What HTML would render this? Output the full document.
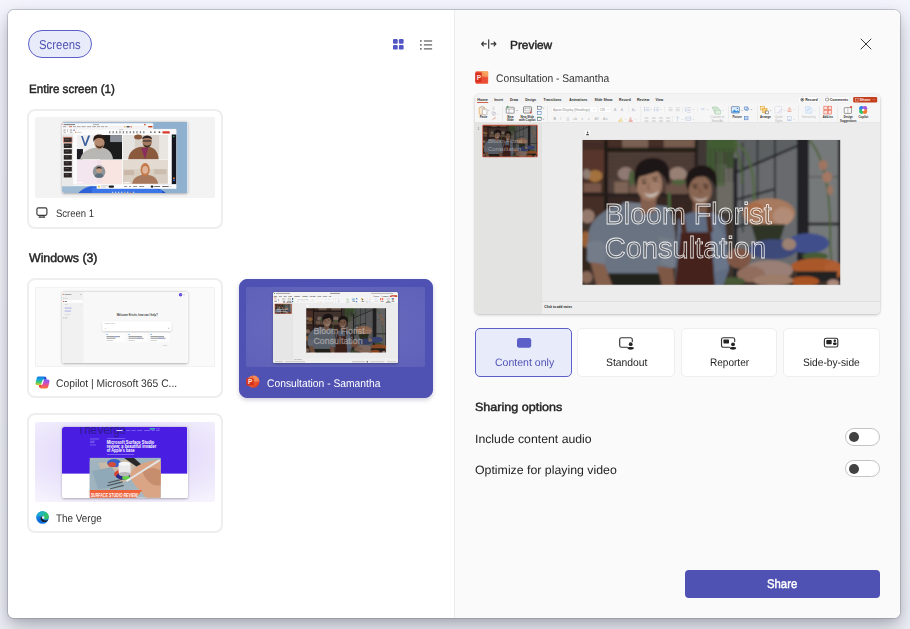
<!DOCTYPE html>
<html lang="en">
<head>
<meta charset="utf-8">
<title>Share content</title>
<style>
*{box-sizing:border-box;margin:0;padding:0}
html,body{width:910px;height:629px;overflow:hidden}
body{position:relative;font-family:"Liberation Sans",sans-serif;color:#242424;
 background:linear-gradient(180deg,#f3f4fc 0px,#eef0f8 629px);}
.abs{position:absolute}
svg.abs{overflow:visible}
#shadow{position:absolute;left:8px;top:10px;width:892px;height:608px;border-radius:6px;
 box-shadow:0 0 0 1px rgba(120,122,132,.36),0 9px 20px rgba(40,42,54,.32),0 2px 6px rgba(40,42,54,.1);}
#dlg{position:absolute;left:8px;top:10px;width:892px;height:608px;border-radius:6px;background:#fff;overflow:hidden}
#right{position:absolute;left:446px;top:0;width:446px;height:609px;background:#fafafa;border-left:1px solid #ebebeb}
.t{position:absolute;white-space:nowrap;transform-origin:0 0;text-rendering:geometricPrecision}
.card{position:absolute;width:196px;height:120.3px;border:2px solid #eeeeee;border-radius:8px;background:#fff}
.card .th{position:absolute;left:6.2px;top:6.5px;width:179.4px;height:80.7px;background:#f3f3f3;overflow:hidden;border-radius:2px}
.card .win{position:absolute;left:27.2px;top:5px;width:125.2px;height:71.2px;border-radius:2.5px;overflow:hidden;background:#fff}
.card .wsh{position:absolute;left:27.2px;top:5px;width:125.2px;height:71.2px;border-radius:2.5px;box-shadow:0 .5px 2.5px rgba(0,0,0,.3)}
.card .win svg{display:block}
.card.sel{background:#4f52b2;border-color:#4f52b2;margin:1px;width:194.6px;height:118.9px;border-width:1px}
.card.sel .th{background:radial-gradient(ellipse at 50% 50%,#696bc0 0%,#6466bc 55%,#5f61b9 100%)}
.card.sel{box-shadow:0 2px 4px rgba(40,42,90,.22)}
.mode{position:absolute;top:328px;height:48.5px;width:97px;border:1px solid #eeeeee;border-radius:5px;background:#fff}
.mode.on{background:#e8ebfa;border-color:#5b5fc7}
.tog{position:absolute;left:844.5px;width:35.5px;height:17.5px;border:1px solid #c4c4c4;border-radius:9px;background:#fff}
.tog i{position:absolute;left:3px;top:2.7px;width:10.3px;height:10.3px;border-radius:50%;background:#424242}
</style>
</head>
<body>
<svg width="0" height="0" style="position:absolute"><defs>
<filter id="bl1" x="-5%" y="-5%" width="110%" height="110%"><feGaussianBlur stdDeviation="1.1"/></filter>
<filter id="bl2" x="-5%" y="-5%" width="110%" height="110%"><feGaussianBlur stdDeviation="2.4"/></filter>
<filter id="bl3" x="-5%" y="-5%" width="110%" height="110%"><feGaussianBlur stdDeviation="3.5"/></filter>
<filter id="bl4" x="-5%" y="-5%" width="110%" height="110%"><feGaussianBlur stdDeviation=".45"/></filter>
<filter id="sh2" x="-10%" y="-30%" width="120%" height="180%"><feGaussianBlur in="SourceAlpha" stdDeviation="1"/><feOffset dy=".6"/><feComponentTransfer><feFuncA type="linear" slope=".18"/></feComponentTransfer><feMerge><feMergeNode/><feMergeNode in="SourceGraphic"/></feMerge></filter>
</defs></svg>
<div id="shadow"></div>
<div id="dlg"><div id="right"></div></div>

<div class="abs" style="left:28px;top:30px;width:64px;height:28px;border:1px solid #5b5fc7;border-radius:14px;background:#e8ebfa"></div>
<div class="t" style="left:39.1px;top:39px;font-size:12.9px;line-height:12.9px;color:#4f52b2;transform:scaleX(0.8833);">Screens</div>
<svg class="abs" style="left:393px;top:38.8px" width="10.6" height="10.6" viewBox="0 0 10.6 10.6"><g fill="#5156c4"><rect x="0" y="0" width="4.7" height="4.7" rx="1.2"/><rect x="5.9" y="0" width="4.7" height="4.7" rx="1.2"/><rect x="0" y="5.9" width="4.7" height="4.7" rx="1.2"/><rect x="5.9" y="5.9" width="4.7" height="4.7" rx="1.2"/></g></svg>
<svg class="abs" style="left:420px;top:39.9px" width="13" height="10" viewBox="0 0 13 10"><g fill="#3d3d3d"><rect x="0" y=".4" width="1.7" height="1.2"/><rect x="3.9" y=".5" width="8.2" height="1"/><rect x="0" y="4.3" width="1.7" height="1.2"/><rect x="3.9" y="4.4" width="8.2" height="1"/><rect x="0" y="8.3" width="1.7" height="1.2"/><rect x="3.9" y="8.4" width="8.2" height="1"/></g></svg>
<div class="t" style="left:29px;top:83px;font-size:12.17px;line-height:12.17px;color:#242424;transform:scaleX(0.956);-webkit-text-stroke:.45px #242424;">Entire screen (1)</div>
<div class="t" style="left:29px;top:252px;font-size:12.32px;line-height:12.32px;color:#242424;transform:scaleX(1.0006);-webkit-text-stroke:.45px #242424;">Windows (3)</div>
<div class="card" style="left:27px;top:108.7px"><div class="th"><div class="wsh"></div><div class="win"><svg width="125.2" height="71.2" viewBox="0 0 125 71" preserveAspectRatio="none"><rect width="125" height="71" fill="#9fbad3"/>
<rect x="90" width="35" height="71" fill="#8fb0cf"/>
<g filter="url(#bl4)"><path d="M16 71 C30 58 50 62 62 71Z" fill="#2d62d8"/><path d="M40 71 C60 58 92 60 104 71Z" fill="#1f4fc8"/><path d="M30 66 C50 62 80 63 100 68 L100 71 L30 71Z" fill="#3b76e8"/></g>
<g fill="#e8eef6"><rect x="50" y="69.6" width="1.2" height="1" /><rect x="53" y="69.6" width="1.2" height="1"/><rect x="56" y="69.6" width="1.2" height="1"/><rect x="59" y="69.6" width="1.2" height="1"/><rect x="62" y="69.6" width="1.2" height="1" fill="#e8c060"/><rect x="65" y="69.6" width="1.2" height="1"/><rect x="68" y="69.6" width="1.2" height="1" fill="#e07040"/><rect x="71" y="69.6" width="1.2" height="1"/></g>
<rect x="0" y="1.5" width="91" height="62.5" fill="#f4f4f4"/>
<rect x="0" y="1.5" width="91" height="2.2" fill="#fbfbfb"/>
<rect x="2" y="2.3" width="11" height=".8" fill="#555"/><circle cx=".9" cy="2.6" r=".5" fill="#d04a2a"/><rect x="31" y="2.3" width="6" height=".8" fill="#999"/>
<rect x="0" y="3.8" width="91" height="1.8" fill="#f1f1f1"/>
<g fill="#8a8a8a"><rect x="1" y="4.4" width="3" height=".7"/><rect x="7" y="4.4" width="3" height=".7" fill="#c43e1c"/><rect x="11" y="4.4" width="3" height=".7"/><rect x="15" y="4.4" width="3.5" height=".7"/><rect x="19.5" y="4.4" width="4" height=".7"/><rect x="25" y="4.4" width="4" height=".7"/><rect x="30" y="4.4" width="4" height=".7"/><rect x="35" y="4.4" width="3" height=".7"/><rect x="39" y="4.4" width="3" height=".7"/><rect x="43" y="4.4" width="2.4" height=".7"/></g>
<rect x="82" y="1.9" width="1.4" height="1.4" fill="#d04a2a"/><rect x="86" y="4.1" width="4.4" height="1.4" rx=".4" fill="#c43e1c"/><rect x="62" y="4.2" width="1.2" height="1.2" fill="#e0a030"/><rect x="64.5" y="4.2" width="3" height="1.2" fill="#333"/><rect x="68.5" y="4.2" width="1.2" height="1.2" fill="#d04a2a"/>
<rect x="0" y="5.8" width="91" height="6.5" fill="#f8f8f8"/>
<g fill="#c9c9c9"><rect x="1.5" y="7" width="2" height="2.6"/><rect x="5" y="7" width="1" height="3"/><rect x="8" y="7" width="2" height="2.6"/><rect x="1.5" y="10.5" width="2.4" height=".6" fill="#999"/><rect x="7.6" y="10.5" width="2.8" height=".6" fill="#999"/></g>
<rect x="0" y="12.3" width="10.8" height="51.7" fill="#e9e9e9"/>
<rect x="1.8" y="15.4" width="8" height="4.5" fill="#3a2c28"/>
<rect x="3" y="17" width="4" height=".5" fill="#9a9a9a" opacity=".6"/>
<rect x="1.8" y="21.4" width="8" height="4.5" fill="#2a2422"/>
<rect x="3" y="23" width="4" height=".5" fill="#9a9a9a" opacity=".6"/>
<rect x="1.8" y="27.2" width="8" height="4.5" fill="#2a2422"/>
<rect x="3" y="28.8" width="4" height=".5" fill="#9a9a9a" opacity=".6"/>
<rect x="1.8" y="33" width="8" height="4.5" fill="#2a2422"/>
<rect x="3" y="34.6" width="4" height=".5" fill="#9a9a9a" opacity=".6"/>
<rect x="1.8" y="39" width="8" height="4.5" fill="#2a2422"/>
<rect x="3" y="40.6" width="4" height=".5" fill="#9a9a9a" opacity=".6"/>
<rect x="1.8" y="44.8" width="8" height="4.5" fill="#2a2422"/>
<rect x="3" y="46.4" width="4" height=".5" fill="#9a9a9a" opacity=".6"/>
<rect x="1.8" y="50.8" width="8" height="4.5" fill="#2a2422"/>
<rect x="3" y="52.4" width="4" height=".5" fill="#9a9a9a" opacity=".6"/>
<rect x="1.5" y="15.1" width="8.6" height="5.1" fill="none" stroke="#c9563c" stroke-width=".5"/>
<rect x="10.8" y="7" width="103.4" height="55.3" rx=".8" fill="#fbfbfb" stroke="#d6d6d6" stroke-width=".3"/>
<rect x="11.5" y="7.6" width="1.2" height="1.2" rx=".3" fill="#4f52b2"/>
<rect x="57" y="7.5" width="4" height=".6" fill="#aaa"/>
<rect x="13" y="9.7" width="1.4" height="1" fill="#e07050"/><rect x="15.4" y="9.9" width="4" height=".7" fill="#bbb"/>
<rect x="47" y="9.3" width="1.4" height="1.4" rx=".4" fill="#5a5a5a"/><rect x="46.8" y="11.4" width="1.8" height=".4" fill="#aaa"/>
<rect x="50.4" y="9.3" width="1.4" height="1.4" rx=".4" fill="#5a5a5a"/><rect x="50.2" y="11.4" width="1.8" height=".4" fill="#aaa"/>
<rect x="53.8" y="9.3" width="1.4" height="1.4" rx=".4" fill="#5a5a5a"/><rect x="53.6" y="11.4" width="1.8" height=".4" fill="#aaa"/>
<rect x="57.2" y="9.3" width="1.4" height="1.4" rx=".4" fill="#5a5a5a"/><rect x="57" y="11.4" width="1.8" height=".4" fill="#aaa"/>
<rect x="60.6" y="9.3" width="1.4" height="1.4" rx=".4" fill="#5a5a5a"/><rect x="60.4" y="11.4" width="1.8" height=".4" fill="#aaa"/>
<rect x="64" y="9.3" width="1.4" height="1.4" rx=".4" fill="#5a5a5a"/><rect x="63.8" y="11.4" width="1.8" height=".4" fill="#aaa"/>
<rect x="67.4" y="9.3" width="1.4" height="1.4" rx=".4" fill="#5a5a5a"/><rect x="67.2" y="11.4" width="1.8" height=".4" fill="#aaa"/>
<rect x="70.8" y="9.3" width="1.4" height="1.4" rx=".4" fill="#5a5a5a"/><rect x="70.6" y="11.4" width="1.8" height=".4" fill="#aaa"/>
<rect x="74.2" y="9.3" width="1.4" height="1.4" rx=".4" fill="#5a5a5a"/><rect x="74" y="11.4" width="1.8" height=".4" fill="#aaa"/>
<rect x="77.6" y="9.3" width="1.4" height="1.4" rx=".4" fill="#5a5a5a"/><rect x="77.4" y="11.4" width="1.8" height=".4" fill="#aaa"/>
<rect x="81" y="9.3" width="1.4" height="1.4" rx=".4" fill="#5a5a5a"/><rect x="80.8" y="11.4" width="1.8" height=".4" fill="#aaa"/>
<rect x="88" y="9.4" width="1.4" height="1.4" rx=".3" fill="#333"/><rect x="92" y="9.4" width="1.4" height="1.4" rx=".3" fill="#333"/><rect x="96.5" y="9.4" width="1.6" height="1.4" rx=".3" fill="#222"/>
<rect x="100.3" y="9.2" width="7.3" height="2.2" rx=".5" fill="#d8392b"/>
<g filter="url(#bl4)">
<rect x="14.9" y="13" width="45" height="24.4" fill="#f0f0f0"/>
<rect x="38" y="13" width="22" height="24.4" fill="#1b1a1c"/>
<rect x="48" y="13" width="12" height="7" fill="#8a8f98"/>
<rect x="14.9" y="27" width="6" height="10.4" fill="#1f1f22"/>
<path d="M19 14 l3.5 10 h1.6 l4 -10.5 h-2 l-2.9 8 l-2.5 -7.5z" fill="#3a5f9c"/>
<path d="M18 37.4 C20 28 30 25.5 37 25.5 C46 25.5 50 30 51 37.4Z" fill="#b9b7b4"/>
<ellipse cx="37.4" cy="20.5" rx="5.2" ry="6.6" fill="#b58a70"/>
<path d="M31.5 20 C30 12.5 36 12.2 38 12.5 C43 12.5 44.5 16 43.3 21 C42 17 40 16 37 16 C34 16 33 17 31.5 20Z" fill="#2a1e18"/>
<path d="M33.6 22.5 C34.5 27.5 40.5 27.5 41.4 22.5 C40 25 35 25 33.6 22.5Z" fill="#4a3428"/>
<rect x="60.7" y="13" width="45" height="24.4" fill="#d8d2cb"/>
<rect x="60.7" y="13" width="12" height="24.4" fill="#e6e4e0"/>
<rect x="97" y="13" width="9" height="24.4" fill="#e9e6e2"/>
<ellipse cx="76" cy="15" rx="4" ry="2.5" fill="#8a5a3c"/>
<path d="M66 37.4 C67 27 76 24.5 83 24.5 C92 24.5 96 29 96.5 37.4Z" fill="#8b5a3e"/>
<path d="M79 26 L83 37.4 L86 26Z" fill="#8a2f5c"/>
<ellipse cx="85" cy="19.5" rx="4.8" ry="6.2" fill="#a47a60"/>
<path d="M80 17 C80 12.5 90 12.5 90 17 C88 15.5 82 15.5 80 17Z" fill="#2a2220"/>
<path d="M81 21.5 C82 27 88 27 89 21.5 C87.5 24.5 82.5 24.5 81 21.5Z" fill="#3a2c26"/>
<rect x="81" y="18.2" width="8" height="1.4" fill="#30282a" opacity=".8"/>
<rect x="14.9" y="38" width="45" height="23.6" fill="#f3dfe6"/>
<rect x="14.9" y="38" width="20" height="23.6" fill="#f3e6ee"/>
<rect x="40" y="38" width="20" height="23.6" fill="#f8e4e0"/>
<circle cx="37" cy="49.5" r="6.3" fill="#8f9499"/>
<circle cx="37" cy="48" r="2.8" fill="#c09a84"/><path d="M32.5 54 C33 50 41 50 41.5 54 C40 56 34 56 32.5 54Z" fill="#5d6f7c"/>
<path d="M34.3 47 C34.3 43.8 39.7 43.8 39.7 47 C38.5 45.8 35.5 45.8 34.3 47Z" fill="#3a2a22"/>
<rect x="60.7" y="38" width="45" height="23.6" fill="#d9cec2"/>
<rect x="60.7" y="38" width="45" height="9" fill="#e3dbd1"/>
<rect x="62" y="48" width="10" height="5" fill="#c9b8aa"/><rect x="92" y="47" width="12" height="5" fill="#cbbcb0"/>
<path d="M70 61.6 C71 54 78 52.5 83 52.5 C90 52.5 95 55 96 61.6Z" fill="#a8785c"/>
<ellipse cx="83" cy="47.5" rx="4.6" ry="6.5" fill="#c4794a"/>
<ellipse cx="83" cy="47.8" rx="2.9" ry="3.8" fill="#dfb49a"/>
</g>
<rect x="59.9" y="13" width=".8" height="48.6" fill="#fbfbfb"/><rect x="14.9" y="37.4" width="90.8" height=".6" fill="#fbfbfb"/>
<rect x="15.6" y="59.8" width="5" height="1.2" fill="#fff" opacity=".8"/><rect x="61.6" y="59.8" width="6" height="1.2" fill="#fff" opacity=".8"/>
<rect x="109.6" y="12.5" width="4.4" height="49.5" fill="#15161f"/>
<circle cx="111.7" cy="14.5" r=".7" fill="#3fbf5f"/><circle cx="111.7" cy="56" r=".9" fill="#e07a30"/><circle cx="111.9" cy="58" r=".9" fill="#3b76e8"/>
<rect x="34.6" y="62.2" width="79.6" height="4.4" fill="#fdfdfd"/>
<rect x="36" y="63.6" width="2" height="1.6" fill="#e8c040"/><rect x="39" y="63.4" width="7" height=".6" fill="#aaa"/><rect x="39" y="64.6" width="5" height=".6" fill="#bbb"/>
<rect x="46.5" y="63.3" width="5.5" height="2.2" rx="1.1" fill="#1c1c1c"/>
<g fill="#777"><rect x="62" y="64" width="3" height=".8"/><rect x="67" y="64" width="2" height=".8"/><rect x="71" y="64" width="4" height=".8"/><rect x="77" y="64" width="5" height=".8"/></g>
<rect x="88.5" y="63.3" width="2.8" height="2.2" rx="1.1" fill="#1c1c1c"/><rect x="92" y="64" width="6" height=".8" fill="#444"/><rect x="100" y="64" width="6.5" height=".8" fill="#444"/><path d="M108 64 l.6 .7 l.6 -.7" stroke="#444" stroke-width=".3" fill="none"/></svg></div></div></div>
<div class="card" style="left:27px;top:278.2px"><div class="th" style="background:#fafafa;box-shadow:inset 0 0 0 .6px #e9e9e9"><div class="wsh"></div><div class="win"><svg width="125.2" height="71.2" viewBox="0 0 125 71" preserveAspectRatio="none"><rect width="125" height="71" fill="#f8f8f8"/>
<rect width="21.4" height="71" fill="#f1f1f1"/>
<g font-family="Liberation Sans, sans-serif">
<rect x=".8" y="1.8" width="1" height="1" fill="#d05a4a"/><rect x="2.4" y="2" width="7" height=".8" fill="#9a9a9a"/><rect x="18" y="2" width="1.6" height=".8" fill="#bbb"/>
<rect x=".8" y="5.8" width="1" height=".8" fill="#bbb"/><rect x="2.6" y="5.9" width="3" height=".7" fill="#c4c4c4"/>
<rect x=".6" y="8" width="20.2" height="2.8" rx=".6" fill="#fff"/><rect x="1" y="8.9" width="1" height="1" fill="#e0503a"/><rect x="2.6" y="9.1" width="2.4" height=".8" fill="#666"/>
<rect x="2.6" y="12.3" width="3" height=".6" fill="#ccc"/><rect x="18.5" y="12.3" width="1" height=".6" fill="#ddd"/>
<rect x="2.6" y="15.6" width="7" height=".8" fill="#9aa0e8"/><rect x="2.6" y="18.6" width="6.4" height=".8" fill="#9aa0e8"/>
<rect x="2.6" y="22.4" width="5.5" height=".6" fill="#ccc"/><rect x="18.5" y="22.4" width="1" height=".6" fill="#ddd"/>
<rect x=".8" y="25.4" width="1" height=".8" fill="#aaa"/><rect x="2.6" y="25.5" width="2.6" height=".7" fill="#aaa"/>
<circle cx="118.4" cy="2.7" r="1.7" fill="#5b3fd6"/><circle cx="118.7" cy="2.5" r=".8" fill="#8a72ea"/><rect x="121.4" y="2.2" width="1" height="1" fill="#9ac8a4"/>
<text x="54.6" y="24.2" font-size="2.9" fill="#3a3a3a" font-weight="bold" textLength="41" lengthAdjust="spacingAndGlyphs" >Welcome Kristin, how can I help?</text>
<rect x="40.3" y="29.2" width="69" height="9.6" rx="2" fill="#fff" filter="url(#sh2)"/>
<text x="42.6" y="32.4" font-size="1.6" fill="#999" textLength="10" lengthAdjust="spacingAndGlyphs" >Message Copilot</text>
<rect x="43" y="36" width="1.2" height=".8" fill="#ccc"/><rect x="105.8" y="35.6" width="1.3" height="1.3" fill="#c9c9c9"/>
<rect x="43.4" y="40.8" width="20" height="9" rx="1" fill="#fdfdfd"/>
<circle cx="45" cy="42.3" r=".6" fill="#4a9cf0"/>
<rect x="44.4" y="44.2" width="13.5" height=".8" fill="#777"/>
<rect x="44.4" y="45.7" width="9" height=".8" fill="#8a8a8a"/>
<rect x="44.4" y="48" width="6.5" height=".6" fill="#bbb"/>
<rect x="65.4" y="40.8" width="20" height="9" rx="1" fill="#fdfdfd"/>
<circle cx="67" cy="42.3" r=".6" fill="#4a9cf0"/>
<rect x="66.4" y="44.2" width="13.5" height=".8" fill="#777"/>
<rect x="66.4" y="45.7" width="15" height=".8" fill="#8a8a8a"/>
<rect x="66.4" y="48" width="6.5" height=".6" fill="#bbb"/>
<rect x="87.4" y="40.8" width="20" height="9" rx="1" fill="#fdfdfd"/>
<circle cx="89" cy="42.3" r=".6" fill="#4a9cf0"/>
<rect x="88.4" y="44.2" width="13.5" height=".8" fill="#777"/>
<rect x="88.4" y="45.7" width="15" height=".8" fill="#8a8a8a"/>
<rect x="88.4" y="48" width="6.5" height=".6" fill="#bbb"/>
<rect x="75" y="45.7" width="3.5" height=".8" fill="#8fa6ee"/><rect x="96" y="45.7" width="6" height=".8" fill="#8fa6ee"/><rect x="52" y="44.2" width="3" height=".8" fill="#8fa6ee"/>
<rect x="100.6" y="53" width="4.6" height=".6" fill="#ccc"/>
</g></svg></div></div></div>
<div class="card sel" style="left:237.5px;top:278.2px"><div class="th"><div class="wsh"></div><div class="win"><svg width="125.2" height="71.2" viewBox="0 0 125 71" preserveAspectRatio="none"><rect width="125" height="71" fill="#ececec"/>
<rect width="125" height="2.6" fill="#f3f3f3"/>
<rect x="3" y=".9" width="14" height=".9" fill="#9a9a9a"/><circle cx="1.6" cy="1.3" r=".6" fill="#3a9a50"/>
<rect x="57" y=".9" width="10" height=".9" fill="#8a8a8a"/><rect x="98" y=".9" width="22" height=".9" fill="#b0b0b0"/>
<g transform="translate(0,2.4) scale(.3086)">
<rect x="0" y="0" width="405" height="28.6" fill="#f6f6f6"/>
<rect x="0" y="0" width="405" height="9.3" fill="#f3f3f3"/>
<rect x="0" y="28.3" width="405" height=".6" fill="#dedede"/>
<g font-family="Liberation Sans, sans-serif">
<text x="2.3" y="6.8" font-size="4.2" fill="#2b2b2b" font-weight="bold" textLength="10.5" lengthAdjust="spacingAndGlyphs" >Home</text>
<text x="19.2" y="6.8" font-size="4.2" fill="#2b2b2b" font-weight="bold" textLength="8.9" lengthAdjust="spacingAndGlyphs" >Insert</text>
<text x="34.9" y="6.8" font-size="4.2" fill="#2b2b2b" font-weight="bold" textLength="8.2" lengthAdjust="spacingAndGlyphs" >Draw</text>
<text x="50.1" y="6.8" font-size="4.2" fill="#2b2b2b" font-weight="bold" textLength="10.9" lengthAdjust="spacingAndGlyphs" >Design</text>
<text x="68.5" y="6.8" font-size="4.2" fill="#2b2b2b" font-weight="bold" textLength="17.9" lengthAdjust="spacingAndGlyphs" >Transitions</text>
<text x="94.2" y="6.8" font-size="4.2" fill="#2b2b2b" font-weight="bold" textLength="18" lengthAdjust="spacingAndGlyphs" >Animations</text>
<text x="119.3" y="6.8" font-size="4.2" fill="#2b2b2b" font-weight="bold" textLength="18" lengthAdjust="spacingAndGlyphs" >Slide Show</text>
<text x="144" y="6.8" font-size="4.2" fill="#2b2b2b" font-weight="bold" textLength="11.6" lengthAdjust="spacingAndGlyphs" >Record</text>
<text x="161.9" y="6.8" font-size="4.2" fill="#2b2b2b" font-weight="bold" textLength="12.3" lengthAdjust="spacingAndGlyphs" >Review</text>
<text x="180.3" y="6.8" font-size="4.2" fill="#2b2b2b" font-weight="bold" textLength="7.8" lengthAdjust="spacingAndGlyphs" >View</text>
<rect x="2" y="8.2" width="11.2" height=".8" fill="#c43e1c"/>
<rect x="323.3" y="3" width="20.5" height="5.4" rx="1.2" fill="#fff" stroke="#e3e3e3" stroke-width=".3"/>
<circle cx="327" cy="5.7" r="1.5" fill="none" stroke="#222" stroke-width=".5"/><circle cx="327" cy="5.7" r=".8" fill="#222"/>
<text x="330" y="7" font-size="3.6" fill="#2b2b2b" font-weight="bold" textLength="12.5" lengthAdjust="spacingAndGlyphs" >Record</text>
<rect x="348.4" y="3" width="26" height="5.4" rx="1.2" fill="#fff" stroke="#e3e3e3" stroke-width=".3"/>
<rect x="350.2" y="4.2" width="3.2" height="2.6" rx=".8" fill="none" stroke="#333" stroke-width=".45"/>
<text x="354.5" y="7" font-size="3.6" fill="#2b2b2b" font-weight="bold" textLength="18.5" lengthAdjust="spacingAndGlyphs" >Comments</text>
<rect x="377.9" y="3" width="24" height="5.6" rx="1.3" fill="#c43e1c"/>
<rect x="380" y="4.3" width="2.8" height="2.8" fill="none" stroke="#f6d3c9" stroke-width=".45"/>
<text x="384.3" y="7.1" font-size="3.7" fill="#fbe9e4" font-weight="bold" textLength="11" lengthAdjust="spacingAndGlyphs" >Share</text>
<path d="M397.5 5.2 l1 1 l1 -1" stroke="#f3c6b9" stroke-width=".4" fill="none"/>
<rect x="4.2" y="13.3" width="5.6" height="7" rx=".8" fill="#fbe9cf" stroke="#d8923a" stroke-width=".55"/>
<rect x="5.8" y="12.4" width="2.6" height="1.6" rx=".5" fill="#f6f6f6" stroke="#8a8a8a" stroke-width=".4"/>
<rect x="7.4" y="15.2" width="4.6" height="5.6" rx=".6" fill="#fafafa" stroke="#8d8d8d" stroke-width=".5"/>
<text x="4.7" y="24.2" font-size="3.5" fill="#2b2b2b" font-weight="bold" textLength="7.6" lengthAdjust="spacingAndGlyphs" >Paste</text>
<path d="M13 15.8 l.9 .9 l.9 -.9" stroke="#777" stroke-width=".35" fill="none"/>
<g stroke="#b9b9c6" stroke-width=".45" fill="none"><path d="M17.4 12.6 l2 3.4 M19.4 12.6 l-2 3.4"/><rect x="17" y="17.8" width="2.2" height="2.8"/><rect x="18" y="18.6" width="2.2" height="2.8"/><path d="M22 19.8 l.8 .8 l.8 -.8"/></g>
<path d="M17.2 25.8 l2.8 -2.6 l.8 .8 z" fill="#f0b9a8" stroke="#e9957f" stroke-width=".3"/>
<rect x="27.2" y="11.5" width=".4" height="16" fill="#dcdcdc"/>
<rect x="31.2" y="13.2" width="8" height="6" rx=".6" fill="#fafafa" stroke="#555" stroke-width=".55"/>
<path d="M31.2 15 h8 M34 15 v4.2" stroke="#666" stroke-width=".4"/>
<path d="M32.6 11.6 v2.6 M31.3 12.9 h2.6" stroke="#3a9a50" stroke-width=".6"/>
<path d="M41.2 16 l.9 .9 l.9 -.9" stroke="#666" stroke-width=".35" fill="none"/>
<text x="35.4" y="24" font-size="3.4" fill="#2b2b2b" font-weight="bold" textLength="6.2" lengthAdjust="spacingAndGlyphs" text-anchor="middle" >New</text>
<text x="35.4" y="27.2" font-size="3.4" fill="#2b2b2b" font-weight="bold" textLength="6.6" lengthAdjust="spacingAndGlyphs" text-anchor="middle" >Slide</text>
<rect x="48.5" y="12.8" width="8" height="6.2" rx=".6" fill="#fafafa" stroke="#444" stroke-width=".6"/>
<rect x="50" y="14.3" width="5" height="2.6" fill="none" stroke="#777" stroke-width=".35"/>
<path d="M55 16.5 l1.6 2.8 l-1.8 -.2z" fill="#e2452d"/>
<text x="52.2" y="24" font-size="3.4" fill="#2b2b2b" font-weight="bold" textLength="13.5" lengthAdjust="spacingAndGlyphs" text-anchor="middle" >New Slide</text>
<text x="52.2" y="27.2" font-size="3.4" fill="#2b2b2b" font-weight="bold" textLength="16.4" lengthAdjust="spacingAndGlyphs" text-anchor="middle" >with Copilot</text>
<g fill="#fafafa" stroke="#3d4b63" stroke-width=".5"><rect x="62.3" y="12.2" width="3.8" height="3"/><rect x="62.3" y="17.6" width="3.8" height="3" stroke="#2b6fc2"/><rect x="62.3" y="23.2" width="3.8" height="3.2"/></g>
<path d="M67.6 13.4 l.8 .8 l.8 -.8 M67.6 24.6 l.8 .8 l.8 -.8" stroke="#444" stroke-width=".4" fill="none"/>
<rect x="62.3" y="22.8" width="3.8" height=".7" fill="#3a9a50"/>
<rect x="72.5" y="11.5" width=".4" height="16" fill="#dcdcdc"/>
<rect x="76.5" y="12.8" width="45.5" height="5.6" rx=".6" fill="#fff" stroke="#e6e6e6" stroke-width=".3"/>
<text x="78" y="17" font-size="3.3" fill="#a9a9a9" font-weight="bold" textLength="37" lengthAdjust="spacingAndGlyphs" >Aptos Display (Headings)</text>
<path d="M118.2 15.2 l.9 .9 l.9 -.9" stroke="#999" stroke-width=".35" fill="none"/>
<rect x="123.5" y="12.8" width="12.2" height="5.6" rx=".6" fill="#fff" stroke="#e6e6e6" stroke-width=".3"/>
<text x="125" y="17" font-size="3.3" fill="#a9a9a9" font-weight="bold" textLength="5" lengthAdjust="spacingAndGlyphs" >115</text>
<path d="M132.4 15.2 l.9 .9 l.9 -.9" stroke="#999" stroke-width=".35" fill="none"/>
<text x="138.6" y="17.2" font-size="4" fill="#b7b7c2" >A</text>
<text x="145.6" y="17.2" font-size="3.4" fill="#b7b7c2" >A</text>
<rect x="153.6" y="12.5" width=".35" height="6" fill="#dcdcdc"/>
<text x="156.6" y="17.2" font-size="3.6" fill="#b9b9cc" >A</text>
<path d="M158.8 17.6 l1.8 -2" stroke="#c9b4d8" stroke-width=".5"/>
<text x="78.5" y="25.6" font-size="3.6" fill="#b5b5b5" font-weight="bold">B</text>
<text x="85.1" y="25.6" font-size="3.6" fill="#b5b5b5" font-style="italic">I</text>
<text x="91.5" y="25.6" font-size="3.6" fill="#b5b5b5" text-decoration="underline">U</text>
<text x="98.1" y="25.6" font-size="3.6" fill="#b5b5b5" >ab</text>
<text x="106.1" y="25.6" font-size="3.6" fill="#b5b5b5" >x</text>
<text x="112.7" y="25.6" font-size="3.6" fill="#b5b5b5" >x</text>
<text x="119.3" y="25.6" font-size="3.6" fill="#b5b5b5" >AV</text>
<text x="127.9" y="25.6" font-size="3.6" fill="#b5b5b5" >Aa</text>
<path d="M143.6 26.4 l2.8 -3 l1 .9 l-2.9 2.8z" fill="#f0d9a0"/><rect x="143.2" y="26.6" width="4.4" height=".8" fill="#e8c24a"/>
<path d="M149.8 24.8 l.8 .8 l.8 -.8" stroke="#aaa" stroke-width=".35" fill="none"/>
<text x="154.2" y="25.8" font-size="3.8" fill="#e9a69a" >A</text>
<rect x="153.7" y="26.6" width="3.8" height=".8" fill="#e0533c"/>
<path d="M159.6 24.8 l.8 .8 l.8 -.8" stroke="#aaa" stroke-width=".35" fill="none"/>
<rect x="165.6" y="11.5" width=".4" height="16" fill="#dcdcdc"/>
<g>
<rect x="171" y="13.6" width="3.2" height=".5" fill="#b6c2dc"/><rect x="171" y="15.1" width="3.2" height=".5" fill="#b6c2dc"/><rect x="171" y="16.6" width="3.2" height=".5" fill="#b6c2dc"/>
<rect x="169.2" y="13.4" width=".8" height=".8" fill="#7d9bd6"/><rect x="169.2" y="14.9" width=".8" height=".8" fill="#7d9bd6"/><rect x="169.2" y="16.4" width=".8" height=".8" fill="#7d9bd6"/>
<rect x="180.6" y="13.6" width="3.2" height=".5" fill="#b6c2dc"/><rect x="180.6" y="15.1" width="3.2" height=".5" fill="#b6c2dc"/><rect x="180.6" y="16.6" width="3.2" height=".5" fill="#b6c2dc"/>
<rect x="178.8" y="13.4" width=".8" height=".8" fill="#9aaede"/><rect x="178.8" y="14.9" width=".8" height=".8" fill="#9aaede"/><rect x="178.8" y="16.4" width=".8" height=".8" fill="#9aaede"/>
<path d="M175 15 l.8 .8 l.8 -.8 M185 15 l.8 .8 l.8 -.8" stroke="#aaa" stroke-width=".35" fill="none"/>
<rect x="189.4" y="12.5" width=".35" height="6" fill="#dcdcdc"/>
<rect x="193.4" y="13.6" width="4" height=".5" fill="#c4c4cc"/><rect x="193.4" y="15.1" width="4" height=".5" fill="#c4c4cc"/><rect x="193.4" y="16.6" width="4" height=".5" fill="#c4c4cc"/>
<rect x="200.6" y="13.6" width="4" height=".5" fill="#c4c4cc"/><rect x="200.6" y="15.1" width="4" height=".5" fill="#c4c4cc"/><rect x="200.6" y="16.6" width="4" height=".5" fill="#c4c4cc"/>
<rect x="207.4" y="12.5" width=".35" height="6" fill="#dcdcdc"/>
<rect x="212" y="13.4" width="3.4" height=".5" fill="#bcc3d8"/><rect x="212" y="14.9" width="3.4" height=".5" fill="#bcc3d8"/><rect x="212" y="16.4" width="3.4" height=".5" fill="#bcc3d8"/><rect x="212" y="17.9" width="3.4" height=".5" fill="#bcc3d8"/>
<path d="M210.6 13.2 v4.8" stroke="#9db0dc" stroke-width=".5"/>
<path d="M217.4 15 l.8 .8 l.8 -.8" stroke="#aaa" stroke-width=".35" fill="none"/>
<rect x="222.3" y="12.5" width=".35" height="6" fill="#dcdcdc"/>
<rect x="225.8" y="14" width="3.6" height=".5" fill="#bccbe8"/><rect x="225.8" y="15.5" width="3.6" height=".5" fill="#bccbe8"/>
<path d="M231.6 15 l.8 .8 l.8 -.8" stroke="#aaa" stroke-width=".35" fill="none"/>
<rect x="169.4" y="23" width="4" height=".5" fill="#c6c6c6"/><rect x="169.4" y="24.5" width="4" height=".5" fill="#c6c6c6"/><rect x="169.4" y="26" width="4" height=".5" fill="#c6c6c6"/><rect x="169.4" y="27.5" width="4" height=".5" fill="#c6c6c6"/>
<rect x="176.6" y="23" width="4" height=".5" fill="#c6c6c6"/><rect x="176.6" y="24.5" width="4" height=".5" fill="#c6c6c6"/><rect x="176.6" y="26" width="4" height=".5" fill="#c6c6c6"/><rect x="176.6" y="27.5" width="4" height=".5" fill="#c6c6c6"/>
<rect x="183.8" y="23" width="4" height=".5" fill="#c6c6c6"/><rect x="183.8" y="24.5" width="4" height=".5" fill="#c6c6c6"/><rect x="183.8" y="26" width="4" height=".5" fill="#c6c6c6"/><rect x="183.8" y="27.5" width="4" height=".5" fill="#c6c6c6"/>
<rect x="191" y="23" width="4" height=".5" fill="#c6c6c6"/><rect x="191" y="24.5" width="4" height=".5" fill="#c6c6c6"/><rect x="191" y="26" width="4" height=".5" fill="#c6c6c6"/><rect x="191" y="27.5" width="4" height=".5" fill="#c6c6c6"/>
<rect x="197.2" y="22" width=".35" height="6" fill="#dcdcdc"/>
<path d="M202.4 22.6 v5 M201 24 l1.4 -1.4 l1.4 1.4" stroke="#b3c4e6" stroke-width=".5" fill="none"/><path d="M206.6 25 l.8 .8 l.8 -.8" stroke="#aaa" stroke-width=".35" fill="none"/>
<rect x="210.8" y="23" width="4.8" height="3.6" fill="none" stroke="#b9c6e2" stroke-width=".5"/><path d="M210 24.8 h6.4" stroke="#b9c6e2" stroke-width=".4"/><path d="M217.4 25 l.8 .8 l.8 -.8" stroke="#aaa" stroke-width=".35" fill="none"/>
</g>
<path d="M237 13 h5 l3 3 v4 h-5 z" fill="#cfe3cf" stroke="#9cc59e" stroke-width=".5"/><rect x="240" y="16.5" width="5" height="3.5" fill="#e3efe3" stroke="#a9cdaa" stroke-width=".4"/>
<path d="M246.8 16 l.8 .8 l.8 -.8" stroke="#bbb" stroke-width=".35" fill="none"/>
<text x="242.2" y="24" font-size="3.2" fill="#b3b3b3" textLength="13.6" lengthAdjust="spacingAndGlyphs" text-anchor="middle" >Convert to</text>
<text x="242.2" y="27.6" font-size="3.2" fill="#b3b3b3" textLength="11.6" lengthAdjust="spacingAndGlyphs" text-anchor="middle" >SmartArt</text>
<rect x="253" y="11.5" width=".4" height="16" fill="#dcdcdc"/>
<rect x="256.2" y="12.6" width="8" height="6.4" rx=".6" fill="#dcebfb" stroke="#3d5a80" stroke-width=".55"/><path d="M256.6 18.2 l2.6 -2.6 l1.8 1.6 l1.4 -1 l1.6 1.6 v.8 h-7.4z" fill="#3b8ee0"/><circle cx="262.2" cy="14.4" r=".7" fill="#3b8ee0"/>
<path d="M266 16 l.8 .8 l.8 -.8" stroke="#666" stroke-width=".35" fill="none"/>
<text x="257.2" y="24.2" font-size="3.5" fill="#2b2b2b" font-weight="bold" textLength="9.4" lengthAdjust="spacingAndGlyphs" >Picture</text>
<circle cx="271.5" cy="14.8" r="1.8" fill="#c7dbf5" stroke="#3a6fc2" stroke-width=".55"/><rect x="269" y="13" width="2.8" height="2.6" fill="#e8f0fb" stroke="#3a6fc2" stroke-width=".5"/>
<path d="M275.4 15 l.8 .8 l.8 -.8" stroke="#666" stroke-width=".35" fill="none"/>
<rect x="269.2" y="22.4" width="3.6" height="3.4" fill="#dfe9f8" stroke="#3a6fc2" stroke-width=".5"/><path d="M269.2 24.1 h3.6" stroke="#3a6fc2" stroke-width=".4"/>
<rect x="281.8" y="11.5" width=".4" height="16" fill="#dcdcdc"/>
<rect x="285.4" y="12.2" width="3.8" height="3.8" fill="#fde8b4" stroke="#e0a030" stroke-width=".55"/><rect x="287.6" y="14.6" width="4.2" height="4.2" fill="#fbd27a" stroke="#d8922a" stroke-width=".55"/><rect x="290.4" y="17" width="2.8" height="2.8" fill="#fafafa" stroke="#555" stroke-width=".5"/>
<path d="M294.6 16 l.8 .8 l.8 -.8" stroke="#666" stroke-width=".35" fill="none"/>
<text x="284.8" y="24.2" font-size="3.5" fill="#2b2b2b" font-weight="bold" textLength="10.9" lengthAdjust="spacingAndGlyphs" >Arrange</text>
<rect x="299.6" y="12.4" width="6.8" height="6.6" rx=".8" fill="#f8f8fb" stroke="#d3d3dc" stroke-width=".5"/><path d="M303 18.6 l3.4 -3.6" stroke="#b5bde0" stroke-width=".7"/>
<path d="M308.4 16 l.8 .8 l.8 -.8" stroke="#bbb" stroke-width=".35" fill="none"/>
<text x="303.6" y="24" font-size="3.2" fill="#b3b3b3" textLength="7.4" lengthAdjust="spacingAndGlyphs" text-anchor="middle" >Quick</text>
<text x="303.6" y="27.6" font-size="3.2" fill="#b3b3b3" textLength="7.6" lengthAdjust="spacingAndGlyphs" text-anchor="middle" >Styles</text>
<path d="M312.4 16 l1.8 -3 l1.8 3z" fill="#f6d0c8" stroke="#eba898" stroke-width=".35"/><rect x="312.2" y="16.8" width="4" height=".8" fill="#e98d7a"/>
<path d="M318.2 15 l.8 .8 l.8 -.8 M318.2 25 l.8 .8 l.8 -.8" stroke="#bbb" stroke-width=".35" fill="none"/>
<rect x="312.4" y="22.4" width="3.8" height="2.8" fill="none" stroke="#b5c6e8" stroke-width=".5"/><rect x="312.2" y="26" width="4" height=".7" fill="#a9bfe8"/>
<rect x="323.3" y="11.5" width=".4" height="16" fill="#dcdcdc"/>
<path d="M330.4 12.4 h4 l2.2 2.2 v4.6 h-6.2z" fill="#e4effb" stroke="#bcd3ee" stroke-width=".5"/><path d="M332 16.8 l3 -3.4" stroke="#a9c6ea" stroke-width=".7"/>
<path d="M338.6 16 l.8 .8 l.8 -.8" stroke="#ccc" stroke-width=".35" fill="none"/>
<text x="326.6" y="24.2" font-size="3.2" fill="#b9b9b9" textLength="13.9" lengthAdjust="spacingAndGlyphs" >Sensitivity</text>
<rect x="344.2" y="11.5" width=".4" height="16" fill="#dcdcdc"/>
<g fill="#fbe3de" stroke="#e4614c" stroke-width=".6"><rect x="348.6" y="12.2" width="3.5" height="3.5"/><rect x="352.9" y="12.2" width="3.5" height="3.5"/><rect x="348.6" y="16.5" width="3.5" height="3.5"/><rect x="352.9" y="16.5" width="3.5" height="3.5"/></g>
<text x="347.6" y="24.2" font-size="3.5" fill="#2b2b2b" font-weight="bold" textLength="10.2" lengthAdjust="spacingAndGlyphs" >Add-ins</text>
<rect x="361.9" y="11.5" width=".4" height="16" fill="#dcdcdc"/>
<rect x="369" y="13.6" width="7.2" height="5.8" rx=".6" fill="#fafafa" stroke="#555" stroke-width=".55"/><path d="M372.6 13.6 v5.8" stroke="#777" stroke-width=".4"/><circle cx="375.8" cy="13" r="1.1" fill="#e0452e"/>
<text x="373" y="24" font-size="3.3" fill="#2b2b2b" font-weight="bold" textLength="9" lengthAdjust="spacingAndGlyphs" text-anchor="middle" >Design</text>
<text x="373" y="27.5" font-size="3.3" fill="#2b2b2b" font-weight="bold" textLength="16.4" lengthAdjust="spacingAndGlyphs" text-anchor="middle" >Suggestions</text>
<g><circle cx="386.2" cy="14.4" r="2.4" fill="#2f80ed"/><circle cx="389.6" cy="14.4" r="2.4" fill="#a259e6"/><circle cx="386.2" cy="17.6" r="2.4" fill="#2fc26e"/><circle cx="389.6" cy="17.6" r="2.4" fill="#f0792e"/><circle cx="387.9" cy="16" r="1.3" fill="#f7f2ff"/></g>
<text x="388" y="24.2" font-size="3.4" fill="#2b2b2b" font-weight="bold" textLength="9.6" lengthAdjust="spacingAndGlyphs" text-anchor="middle" >Copilot</text>
</g>
</g>
<rect x="0" y="11.2" width="19.6" height="57" fill="#e6e6e6"/>
<rect x="19.6" y="11.2" width=".3" height="57" fill="#d6d6d6"/>
<rect x="1.7" y="11.8" width="17" height="10" rx=".5" fill="#c9563c"/>
<svg x="2.1" y="12.2" width="16.2" height="9.2" viewBox="0 0 257 144.5" preserveAspectRatio="none">
<g filter="url(#bl3)">
<rect x="-3" y="-3" width="263" height="151" fill="#443832"/>
<rect x="-3" y="-3" width="120" height="80" fill="#4d332a"/>
<rect x="0" y="10" width="24" height="24" fill="#6a4236"/>
<rect x="25" y="12" width="90" height="42" fill="#5b463f"/>
<rect x="25" y="56" width="90" height="22" fill="#3a2b27"/>
<rect x="25" y="16" width="90" height=".7" fill="#3e2e29" opacity=".6"/>
<rect x="25" y="20" width="90" height=".7" fill="#3e2e29" opacity=".6"/>
<rect x="25" y="24" width="90" height=".7" fill="#3e2e29" opacity=".6"/>
<rect x="25" y="28" width="90" height=".7" fill="#3e2e29" opacity=".6"/>
<rect x="25" y="32" width="90" height=".7" fill="#3e2e29" opacity=".6"/>
<rect x="25" y="36" width="90" height=".7" fill="#3e2e29" opacity=".6"/>
<rect x="0" y="4" width="21" height=".7" fill="#3e2620" opacity=".6"/>
<rect x="0" y="8" width="21" height=".7" fill="#3e2620" opacity=".6"/>
<rect x="0" y="12" width="21" height=".7" fill="#3e2620" opacity=".6"/>
<rect x="0" y="16" width="21" height=".7" fill="#3e2620" opacity=".6"/>
<rect x="0" y="20" width="21" height=".7" fill="#3e2620" opacity=".6"/>
<rect x="0" y="24" width="21" height=".7" fill="#3e2620" opacity=".6"/>
<rect x="0" y="28" width="21" height=".7" fill="#3e2620" opacity=".6"/>
<rect x="39.5" y="-1" width="26" height="9.5" fill="#8f7261"/>
<rect x="81" y="-1" width="31" height="12.5" fill="#8a6c5b"/>
<rect x="21.5" y="0" width="3.5" height="70" fill="#1f1a19"/>
<rect x="25" y="7.5" width="89" height="4.5" fill="#241d1b"/>
<rect x="112" y="0" width="3" height="26" fill="#221c1b"/>
<rect x="0" y="53" width="115" height="3" fill="#2a211f"/>
<rect x="1" y="43" width="17.5" height="9" fill="#8b6554"/>
<rect x="31.7" y="41.6" width="14" height="11.5" fill="#927562"/>
<rect x="47" y="42" width="8" height="11" fill="#86695a"/>
<rect x="83" y="43.5" width="22" height="10.5" fill="#7d6152"/>
<ellipse cx="12.5" cy="36" rx="7.5" ry="6" fill="#c08545"/>
<ellipse cx="4" cy="34" rx="4" ry="5" fill="#a9958a"/>
<ellipse cx="43" cy="33.5" rx="8" ry="6.5" fill="#a88f86"/>
<ellipse cx="49" cy="38" rx="3" ry="8" fill="#5b7046"/>
<ellipse cx="95" cy="34" rx="9" ry="7" fill="#b3978a"/>
<ellipse cx="96" cy="42" rx="7" ry="3" fill="#5d7347"/>
<rect x="85" y="52" width="3" height="20" fill="#55703f"/>
<rect x="115" y="-1" width="40" height="80" fill="#48403b"/>
<rect x="134" y="24" width="17" height="48" fill="#7d7c75"/>
<rect x="150" y="-3" width="110" height="130" fill="#787e80"/>
<rect x="226" y="-3" width="34" height="130" fill="#8a8f8e"/>
<polygon points="154,34 214,7 214,-3 154,-3" fill="#6a7072"/>
<rect x="150.5" y="18" width="3.8" height="130" fill="#23252a"/>
<rect x="159.2" y="2" width="1.2" height="90" fill="#2a2c30"/>
<rect x="173.8" y="-2" width="1.4" height="80" fill="#2a2c30"/>
<rect x="191" y="-2" width="1.6" height="66" fill="#2a2c30"/>
<rect x="213.9" y="-3" width="11.7" height="125" fill="#24252b"/>
<rect x="254.8" y="-3" width="3" height="150" fill="#2a2a2e"/>
<polygon points="152,31.6 214,5 214,7.2 152,33.8" fill="#25272b"/>
<polygon points="152,58.8 192,47.8 192,49.8 152,60.8" fill="#25272b"/>
<polygon points="152,86 175,80 175,82 152,88" fill="#25272b"/>
<rect x="225" y="82.5" width="32" height="2.6" fill="#26282c"/>
<rect x="225" y="36" width="32" height="1.4" fill="#4a4d50" opacity=".5"/>
<rect x="124" y="-2" width="9" height="40" fill="#4c6a3c"/>
<rect x="134" y="-2" width="8" height="48" fill="#58744a" opacity=".85"/>
<rect x="143" y="-2" width="8" height="30" fill="#47623a"/>
<rect x="128" y="-2" width="26" height="14" fill="#4b6b3a"/>
<rect x="127" y="8" width="1.3" height="34" fill="#3c3a33" opacity=".55"/>
<rect x="131.5" y="8" width="1.3" height="34" fill="#3c3a33" opacity=".55"/>
<rect x="136" y="8" width="1.3" height="34" fill="#3c3a33" opacity=".55"/>
<rect x="140.5" y="8" width="1.3" height="34" fill="#3c3a33" opacity=".55"/>
<rect x="145" y="8" width="1.3" height="34" fill="#3c3a33" opacity=".55"/>
<rect x="149" y="8" width="1.3" height="34" fill="#3c3a33" opacity=".55"/>
<path d="M152 2 C166 10 172 30 171 62" stroke="#5f7a4c" stroke-width="2.4" fill="none"/>
<path d="M150 6 C158 20 160 30 159 44" stroke="#56703f" stroke-width="1.8" fill="none"/>
<path d="M226 0 C240 14 248 50 247 100 C247 120 250 130 251 140" stroke="#55703e" stroke-width="1.8" fill="none"/>
<ellipse cx="240" cy="25" rx="4.5" ry="5" fill="#bb8871"/>
<ellipse cx="244" cy="37" rx="5" ry="5.5" fill="#c08c74"/>
<ellipse cx="247" cy="50" rx="3" ry="5" fill="#b78a74"/>
<ellipse cx="186" cy="73" rx="26" ry="15" fill="#c4906f"/>
<ellipse cx="200" cy="76" rx="10" ry="9" fill="#d3a58c"/>
<ellipse cx="172" cy="68" rx="8" ry="6" fill="#c77f55"/>
<polygon points="168,84 202,84 194,110 176,110" fill="#343d2b"/>
<ellipse cx="190" cy="109" rx="24" ry="10" fill="#44548f"/>
<ellipse cx="225" cy="103" rx="21" ry="10" fill="#4a5ca5"/>
<ellipse cx="206" cy="104" rx="7" ry="6" fill="#b79886"/>
<ellipse cx="232" cy="116" rx="13" ry="4" fill="#4e6a3e"/>
<ellipse cx="233" cy="126" rx="25" ry="8" fill="#c8682f"/>
<ellipse cx="250" cy="130" rx="9" ry="9" fill="#cf6f38"/>
<rect x="214" y="131" width="40" height="10" fill="#262826"/>
<ellipse cx="222" cy="141" rx="14" ry="5" fill="#c76027"/>
<ellipse cx="250" cy="143" rx="6" ry="4" fill="#c9a090"/>
<ellipse cx="186" cy="130" rx="24" ry="10" fill="#b49689"/>
<ellipse cx="168" cy="134" rx="14" ry="8" fill="#a9806d"/>
<ellipse cx="190" cy="140" rx="20" ry="6" fill="#b8917e"/>
<ellipse cx="150" cy="141" rx="12" ry="4" fill="#50683d"/>
<ellipse cx="5" cy="76" rx="7" ry="7" fill="#b08f80"/>
<ellipse cx="3" cy="99" rx="5" ry="8" fill="#b5713c"/>
<ellipse cx="4" cy="137" rx="6" ry="6" fill="#a27a68"/>
<rect x="-2" y="108" width="9" height="22" fill="#3c2a22"/>
<path d="M95 80 C104 68 132 68 142 80 L146 130 L140 146 L92 146 Z" fill="#6f7f98"/>
<path d="M127 80 C140 84 145 100 146 128 L132 132 Z" fill="#7a8aa2"/>
<path d="M98 92 L128 92 L132 146 L92 146 Z" fill="#4d281e"/>
<path d="M100 64 L104 92 L99 92 L96 70 Z" fill="#5a2f22"/>
<path d="M127 66 L130 92 L125 92 L123 70 Z" fill="#5a2f22"/>
<ellipse cx="156" cy="118" rx="12" ry="10" fill="#95664f"/>
<rect x="110" y="58" width="14" height="14" fill="#8f6650"/>
<ellipse cx="117.5" cy="50" rx="11.5" ry="14.5" fill="#a1775f"/>
<path d="M103.5 46 C101 30 112 24.5 121 25.5 C132 26.5 136 36 133.5 49 C131 42 127 37 121 36.5 C113 36 108 38 105.5 50 Z" fill="#1f1917"/>
<path d="M110 56 C114 60 121 60 125 56 C123 63 113 63 110 56Z" fill="#e2d2c8"/>
<ellipse cx="112.5" cy="47.5" rx="2.2" ry=".8" fill="#2a1c18"/><ellipse cx="123" cy="47.5" rx="2.2" ry=".8" fill="#2a1c18"/>
<path d="M109.5 45 l5.5 -.6 M120 44.4 l5.5 .6" stroke="#2a1c18" stroke-width="1"/>
<path d="M117.5 47 l-.8 5.5 l2.6 .2" stroke="#7d5542" stroke-width=".9" fill="none"/>
<path d="M107 57 C110 68 125 68 128 56 C126 64 122 66 117.5 66.5 C112 66 109 63 107 57Z" fill="#3a2a24"/>
<path d="M6 92 C10 72 34 64 48 62 L84 66 C92 74 94 100 93 126 L78 134 L24 134 L4 120 Z" fill="#7c8798"/>
<path d="M40 62 L56 84 L72 64 Z" fill="#8a93a0"/>
<path d="M4 104 C8 98 20 100 24 106 L22 124 L6 122 Z" fill="#8792a2"/>
<path d="M76 96 L93 100 L92 128 L78 124 Z" fill="#8691a1"/>
<rect x="25" y="133" width="52" height="14" fill="#272322"/>
<path d="M8 122 L22 124 L30 146 L14 146 Z" fill="#9a6e58"/>
<path d="M74 126 L90 128 L92 146 L80 146 Z" fill="#94674f"/>
<path d="M58 56 L74 58 L72 72 L58 74 Z" fill="#9b715c"/>
<ellipse cx="66.5" cy="44" rx="13" ry="16.5" fill="#b88d75"/>
<path d="M52.5 44 C49 26 58 18 70 18 C84 18 90 28 85.5 46 C83 38 80 33 74 31.5 C68 34 60 36 56.5 37 C55 40 54.5 44 54 49 Z" fill="#1d1817"/>
<path d="M61 52 C65 55.5 72 54.5 76 50 C75 58 64 60 61 52Z" fill="#e9dbd2"/>
<ellipse cx="61.5" cy="42.5" rx="2.2" ry=".9" fill="#2a1c18"/><ellipse cx="72.5" cy="40.5" rx="2.2" ry=".9" fill="#2a1c18"/>
<path d="M58.5 40 l5 -1 M69.5 38 l5.5 -.8" stroke="#2a1c18" stroke-width="1"/>
<path d="M66.5 43 l-1.5 5.5 l3 .3" stroke="#8a5f4b" stroke-width=".9" fill="none"/>
<ellipse cx="72" cy="46" rx="5" ry="6" fill="#c39a84" opacity=".5"/>
<rect x="-3" y="-3" width="263" height="151" fill="#1a1210" opacity=".17"/>
</g>
<g font-family="Liberation Sans, sans-serif" font-size="30" font-weight="bold" fill="#e6e2df" fill-opacity=".8">
<text x="30" y="83.6" textLength="165" lengthAdjust="spacingAndGlyphs">Bloom Florist</text>
<text x="30" y="117.3" textLength="158.5" lengthAdjust="spacingAndGlyphs">Consultation</text></g>
</svg>
<rect x="33.6" y="12.8" width="1.8" height="1.8" rx=".4" fill="#fafafa"/>
<svg x="33.2" y="16.1" width="79.7" height="44.2" viewBox="0 0 257 144.5" preserveAspectRatio="none">
<g filter="url(#bl2)">
<rect x="-3" y="-3" width="263" height="151" fill="#443832"/>
<rect x="-3" y="-3" width="120" height="80" fill="#4d332a"/>
<rect x="0" y="10" width="24" height="24" fill="#6a4236"/>
<rect x="25" y="12" width="90" height="42" fill="#5b463f"/>
<rect x="25" y="56" width="90" height="22" fill="#3a2b27"/>
<rect x="25" y="16" width="90" height=".7" fill="#3e2e29" opacity=".6"/>
<rect x="25" y="20" width="90" height=".7" fill="#3e2e29" opacity=".6"/>
<rect x="25" y="24" width="90" height=".7" fill="#3e2e29" opacity=".6"/>
<rect x="25" y="28" width="90" height=".7" fill="#3e2e29" opacity=".6"/>
<rect x="25" y="32" width="90" height=".7" fill="#3e2e29" opacity=".6"/>
<rect x="25" y="36" width="90" height=".7" fill="#3e2e29" opacity=".6"/>
<rect x="0" y="4" width="21" height=".7" fill="#3e2620" opacity=".6"/>
<rect x="0" y="8" width="21" height=".7" fill="#3e2620" opacity=".6"/>
<rect x="0" y="12" width="21" height=".7" fill="#3e2620" opacity=".6"/>
<rect x="0" y="16" width="21" height=".7" fill="#3e2620" opacity=".6"/>
<rect x="0" y="20" width="21" height=".7" fill="#3e2620" opacity=".6"/>
<rect x="0" y="24" width="21" height=".7" fill="#3e2620" opacity=".6"/>
<rect x="0" y="28" width="21" height=".7" fill="#3e2620" opacity=".6"/>
<rect x="39.5" y="-1" width="26" height="9.5" fill="#8f7261"/>
<rect x="81" y="-1" width="31" height="12.5" fill="#8a6c5b"/>
<rect x="21.5" y="0" width="3.5" height="70" fill="#1f1a19"/>
<rect x="25" y="7.5" width="89" height="4.5" fill="#241d1b"/>
<rect x="112" y="0" width="3" height="26" fill="#221c1b"/>
<rect x="0" y="53" width="115" height="3" fill="#2a211f"/>
<rect x="1" y="43" width="17.5" height="9" fill="#8b6554"/>
<rect x="31.7" y="41.6" width="14" height="11.5" fill="#927562"/>
<rect x="47" y="42" width="8" height="11" fill="#86695a"/>
<rect x="83" y="43.5" width="22" height="10.5" fill="#7d6152"/>
<ellipse cx="12.5" cy="36" rx="7.5" ry="6" fill="#c08545"/>
<ellipse cx="4" cy="34" rx="4" ry="5" fill="#a9958a"/>
<ellipse cx="43" cy="33.5" rx="8" ry="6.5" fill="#a88f86"/>
<ellipse cx="49" cy="38" rx="3" ry="8" fill="#5b7046"/>
<ellipse cx="95" cy="34" rx="9" ry="7" fill="#b3978a"/>
<ellipse cx="96" cy="42" rx="7" ry="3" fill="#5d7347"/>
<rect x="85" y="52" width="3" height="20" fill="#55703f"/>
<rect x="115" y="-1" width="40" height="80" fill="#48403b"/>
<rect x="134" y="24" width="17" height="48" fill="#7d7c75"/>
<rect x="150" y="-3" width="110" height="130" fill="#787e80"/>
<rect x="226" y="-3" width="34" height="130" fill="#8a8f8e"/>
<polygon points="154,34 214,7 214,-3 154,-3" fill="#6a7072"/>
<rect x="150.5" y="18" width="3.8" height="130" fill="#23252a"/>
<rect x="159.2" y="2" width="1.2" height="90" fill="#2a2c30"/>
<rect x="173.8" y="-2" width="1.4" height="80" fill="#2a2c30"/>
<rect x="191" y="-2" width="1.6" height="66" fill="#2a2c30"/>
<rect x="213.9" y="-3" width="11.7" height="125" fill="#24252b"/>
<rect x="254.8" y="-3" width="3" height="150" fill="#2a2a2e"/>
<polygon points="152,31.6 214,5 214,7.2 152,33.8" fill="#25272b"/>
<polygon points="152,58.8 192,47.8 192,49.8 152,60.8" fill="#25272b"/>
<polygon points="152,86 175,80 175,82 152,88" fill="#25272b"/>
<rect x="225" y="82.5" width="32" height="2.6" fill="#26282c"/>
<rect x="225" y="36" width="32" height="1.4" fill="#4a4d50" opacity=".5"/>
<rect x="124" y="-2" width="9" height="40" fill="#4c6a3c"/>
<rect x="134" y="-2" width="8" height="48" fill="#58744a" opacity=".85"/>
<rect x="143" y="-2" width="8" height="30" fill="#47623a"/>
<rect x="128" y="-2" width="26" height="14" fill="#4b6b3a"/>
<rect x="127" y="8" width="1.3" height="34" fill="#3c3a33" opacity=".55"/>
<rect x="131.5" y="8" width="1.3" height="34" fill="#3c3a33" opacity=".55"/>
<rect x="136" y="8" width="1.3" height="34" fill="#3c3a33" opacity=".55"/>
<rect x="140.5" y="8" width="1.3" height="34" fill="#3c3a33" opacity=".55"/>
<rect x="145" y="8" width="1.3" height="34" fill="#3c3a33" opacity=".55"/>
<rect x="149" y="8" width="1.3" height="34" fill="#3c3a33" opacity=".55"/>
<path d="M152 2 C166 10 172 30 171 62" stroke="#5f7a4c" stroke-width="2.4" fill="none"/>
<path d="M150 6 C158 20 160 30 159 44" stroke="#56703f" stroke-width="1.8" fill="none"/>
<path d="M226 0 C240 14 248 50 247 100 C247 120 250 130 251 140" stroke="#55703e" stroke-width="1.8" fill="none"/>
<ellipse cx="240" cy="25" rx="4.5" ry="5" fill="#bb8871"/>
<ellipse cx="244" cy="37" rx="5" ry="5.5" fill="#c08c74"/>
<ellipse cx="247" cy="50" rx="3" ry="5" fill="#b78a74"/>
<ellipse cx="186" cy="73" rx="26" ry="15" fill="#c4906f"/>
<ellipse cx="200" cy="76" rx="10" ry="9" fill="#d3a58c"/>
<ellipse cx="172" cy="68" rx="8" ry="6" fill="#c77f55"/>
<polygon points="168,84 202,84 194,110 176,110" fill="#343d2b"/>
<ellipse cx="190" cy="109" rx="24" ry="10" fill="#44548f"/>
<ellipse cx="225" cy="103" rx="21" ry="10" fill="#4a5ca5"/>
<ellipse cx="206" cy="104" rx="7" ry="6" fill="#b79886"/>
<ellipse cx="232" cy="116" rx="13" ry="4" fill="#4e6a3e"/>
<ellipse cx="233" cy="126" rx="25" ry="8" fill="#c8682f"/>
<ellipse cx="250" cy="130" rx="9" ry="9" fill="#cf6f38"/>
<rect x="214" y="131" width="40" height="10" fill="#262826"/>
<ellipse cx="222" cy="141" rx="14" ry="5" fill="#c76027"/>
<ellipse cx="250" cy="143" rx="6" ry="4" fill="#c9a090"/>
<ellipse cx="186" cy="130" rx="24" ry="10" fill="#b49689"/>
<ellipse cx="168" cy="134" rx="14" ry="8" fill="#a9806d"/>
<ellipse cx="190" cy="140" rx="20" ry="6" fill="#b8917e"/>
<ellipse cx="150" cy="141" rx="12" ry="4" fill="#50683d"/>
<ellipse cx="5" cy="76" rx="7" ry="7" fill="#b08f80"/>
<ellipse cx="3" cy="99" rx="5" ry="8" fill="#b5713c"/>
<ellipse cx="4" cy="137" rx="6" ry="6" fill="#a27a68"/>
<rect x="-2" y="108" width="9" height="22" fill="#3c2a22"/>
<path d="M95 80 C104 68 132 68 142 80 L146 130 L140 146 L92 146 Z" fill="#6f7f98"/>
<path d="M127 80 C140 84 145 100 146 128 L132 132 Z" fill="#7a8aa2"/>
<path d="M98 92 L128 92 L132 146 L92 146 Z" fill="#4d281e"/>
<path d="M100 64 L104 92 L99 92 L96 70 Z" fill="#5a2f22"/>
<path d="M127 66 L130 92 L125 92 L123 70 Z" fill="#5a2f22"/>
<ellipse cx="156" cy="118" rx="12" ry="10" fill="#95664f"/>
<rect x="110" y="58" width="14" height="14" fill="#8f6650"/>
<ellipse cx="117.5" cy="50" rx="11.5" ry="14.5" fill="#a1775f"/>
<path d="M103.5 46 C101 30 112 24.5 121 25.5 C132 26.5 136 36 133.5 49 C131 42 127 37 121 36.5 C113 36 108 38 105.5 50 Z" fill="#1f1917"/>
<path d="M110 56 C114 60 121 60 125 56 C123 63 113 63 110 56Z" fill="#e2d2c8"/>
<ellipse cx="112.5" cy="47.5" rx="2.2" ry=".8" fill="#2a1c18"/><ellipse cx="123" cy="47.5" rx="2.2" ry=".8" fill="#2a1c18"/>
<path d="M109.5 45 l5.5 -.6 M120 44.4 l5.5 .6" stroke="#2a1c18" stroke-width="1"/>
<path d="M117.5 47 l-.8 5.5 l2.6 .2" stroke="#7d5542" stroke-width=".9" fill="none"/>
<path d="M107 57 C110 68 125 68 128 56 C126 64 122 66 117.5 66.5 C112 66 109 63 107 57Z" fill="#3a2a24"/>
<path d="M6 92 C10 72 34 64 48 62 L84 66 C92 74 94 100 93 126 L78 134 L24 134 L4 120 Z" fill="#7c8798"/>
<path d="M40 62 L56 84 L72 64 Z" fill="#8a93a0"/>
<path d="M4 104 C8 98 20 100 24 106 L22 124 L6 122 Z" fill="#8792a2"/>
<path d="M76 96 L93 100 L92 128 L78 124 Z" fill="#8691a1"/>
<rect x="25" y="133" width="52" height="14" fill="#272322"/>
<path d="M8 122 L22 124 L30 146 L14 146 Z" fill="#9a6e58"/>
<path d="M74 126 L90 128 L92 146 L80 146 Z" fill="#94674f"/>
<path d="M58 56 L74 58 L72 72 L58 74 Z" fill="#9b715c"/>
<ellipse cx="66.5" cy="44" rx="13" ry="16.5" fill="#b88d75"/>
<path d="M52.5 44 C49 26 58 18 70 18 C84 18 90 28 85.5 46 C83 38 80 33 74 31.5 C68 34 60 36 56.5 37 C55 40 54.5 44 54 49 Z" fill="#1d1817"/>
<path d="M61 52 C65 55.5 72 54.5 76 50 C75 58 64 60 61 52Z" fill="#e9dbd2"/>
<ellipse cx="61.5" cy="42.5" rx="2.2" ry=".9" fill="#2a1c18"/><ellipse cx="72.5" cy="40.5" rx="2.2" ry=".9" fill="#2a1c18"/>
<path d="M58.5 40 l5 -1 M69.5 38 l5.5 -.8" stroke="#2a1c18" stroke-width="1"/>
<path d="M66.5 43 l-1.5 5.5 l3 .3" stroke="#8a5f4b" stroke-width=".9" fill="none"/>
<ellipse cx="72" cy="46" rx="5" ry="6" fill="#c39a84" opacity=".5"/>
<rect x="-3" y="-3" width="263" height="151" fill="#1a1210" opacity=".17"/>
</g>
<rect width="257" height="144.5" fill="#15100e" opacity=".22"/>
<g font-family="Liberation Sans, sans-serif" font-size="28.3" fill="#c9c5c2" fill-opacity=".38" stroke="#e8e4e2" stroke-width="1.4" stroke-opacity=".4">
<text x="23" y="83.6" textLength="165" lengthAdjust="spacingAndGlyphs">Bloom Florist</text>
<text x="23" y="117.3" textLength="158.5" lengthAdjust="spacingAndGlyphs">Consultation</text></g>
</svg>
<rect x="19.9" y="65" width="105.2" height=".25" fill="#d2d2d2"/>
<rect x="19.9" y="65.2" width="105.2" height="3.4" fill="#efefef"/>
<rect x="0" y="68.4" width="125" height="2.6" fill="#f1f1f1"/>
<g font-family="Liberation Sans, sans-serif">
<text x="21.2" y="67.6" font-size="1.5" fill="#666" textLength="7.6" lengthAdjust="spacingAndGlyphs" >Click to add notes</text>
</g>
<rect x="2" y="69.3" width="8" height=".7" fill="#aaa"/><rect x="12" y="69.3" width="20" height=".7" fill="#b5b5b5"/><rect x="79" y="69.3" width="13" height=".7" fill="#aaa"/><rect x="93.5" y="69" width="1.4" height="1.2" fill="#555"/><rect x="97" y="69.3" width="14" height=".7" fill="#b5b5b5"/><rect x="114" y="69.3" width="9" height=".7" fill="#b5b5b5"/></svg></div></div></div>
<div class="card" style="left:27px;top:413.2px"><div class="th" style="background:radial-gradient(ellipse 75% 70% at 50% 42%,#dfd5fa 0%,#e6defb 50%,#efeafc 80%,#f6f3fd 100%)"><div class="wsh"></div><div class="win"><svg width="125.2" height="71.2" viewBox="0 0 125 71" preserveAspectRatio="none"><rect width="125" height="71" fill="#fff"/>
<rect width="125" height="46.5" fill="#4a1de2"/>
<g font-family="Liberation Sans, sans-serif">
<text x="15.5" y="7.4" font-size="13.6" fill="#2a1a8c" textLength="48" lengthAdjust="spacingAndGlyphs" letter-spacing="-.3">TheVerge</text>
<rect x="54.5" y="3" width="6" height="1" fill="#d9d2ff"/><g fill="#8a78f0"><rect x="64" y="3.2" width="4" height=".7"/><rect x="69.5" y="3.2" width="4" height=".7"/><rect x="75" y="3.2" width="5" height=".7"/><rect x="82" y="3.2" width="6" height=".7"/><rect x="89.5" y="3.2" width="3" height=".7"/><rect x="94" y="3.2" width="3.5" height=".7"/></g>
<rect x="87.5" y="1.3" width="5.5" height="1.2" rx=".4" fill="#3fd6a8"/><rect x="94" y="1.5" width="4" height=".7" fill="#8a78f0"/>
<g fill="#8f7ff2"><rect x="28" y="11.6" width="9" height=".7"/><rect x="28" y="13.8" width="5" height=".6"/><rect x="28" y="15.4" width="4" height=".6"/><rect x="28" y="17.6" width="6" height=".6"/><rect x="45" y="11.4" width="18" height=".6"/><rect x="45" y="27.2" width="27" height=".7"/></g>
<text x="44.6" y="16.8" font-size="4.5" fill="#fff" font-weight="bold" textLength="47.5" lengthAdjust="spacingAndGlyphs" >Microsoft Surface Studio</text>
<text x="44.6" y="21" font-size="4.5" fill="#fff" font-weight="bold" textLength="49.5" lengthAdjust="spacingAndGlyphs" >review: a beautiful invader</text>
<text x="44.6" y="25.2" font-size="4.5" fill="#fff" font-weight="bold" textLength="28" lengthAdjust="spacingAndGlyphs" >of Apple’s base</text>
<g filter="url(#bl4)">
<rect x="27.7" y="30.8" width="70.8" height="39.7" fill="#a9b6bd"/>
<polygon points="27.7,34 62,30.8 98.5,30.8 98.5,44 70,64 27.7,64" fill="#9fb4bf"/>
<polygon points="36,36 70,32 78,50 46,60" fill="#c9b9a8"/>
<polygon points="30,44 50,40 60,58 36,62" fill="#8fa9b8"/>
<ellipse cx="52" cy="36" rx="7" ry="4" fill="#3a5fc8"/><ellipse cx="50" cy="37.5" rx="4" ry="2.5" fill="#d0503a"/>
<ellipse cx="60" cy="47" rx="8" ry="4.5" fill="#d8452f"/><ellipse cx="61" cy="49" rx="7" ry="3.5" fill="#2a2a8c"/><ellipse cx="64" cy="50.5" rx="4" ry="2" fill="#6ad04a"/>
<rect x="56.5" y="36" width="12" height="11" rx="2" fill="#e9e9ea"/><ellipse cx="62.5" cy="47" rx="6" ry="2.2" fill="#b9b9bc"/><ellipse cx="62.5" cy="36.6" rx="6" ry="2" fill="#f6f6f6"/>
<polygon points="62,30.8 72,30.8 82,40 78,42" fill="#2a2a2c"/>
<path d="M68 48 C70 40 80 34 98.5 33 L98.5 70.5 L84 70.5 C78 62 70 58 68 48Z" fill="#d9a585"/>
<path d="M80 44 C86 40 94 40 98.5 44 L98.5 58 C90 60 84 54 80 44Z" fill="#c78e6e"/>
<polygon points="66.5,51.5 67.5,53 98,33.8 97,32.2" fill="#e4e4e6"/>
<polygon points="64,53 67.2,51.2 68,52.6 65,54.5" fill="#f6f6f6"/>
<g fill="#3a3a3a" opacity=".75"><rect x="46" y="55" width="14" height="1.2" transform="rotate(-14 46 55)"/><rect x="45" y="58" width="16" height="1.2" transform="rotate(-14 45 58)"/><rect x="48" y="61" width="14" height="1.2" transform="rotate(-14 48 61)"/></g>
</g>
<polygon points="27.7,62.8 80,62.8 74,70.5 27.7,70.5" fill="#f0623a"/>
<text x="28.6" y="69.4" font-size="6" font-weight="bold" font-style="italic" fill="#fff" textLength="47" lengthAdjust="spacingAndGlyphs">SURFACE STUDIO REVIEW</text>
</g></svg></div></div></div>
<div class="t" style="left:56px;top:209px;font-size:10.87px;line-height:10.87px;color:#333;transform:scaleX(0.8734);">Screen 1</div>
<div class="t" style="left:55.8px;top:379px;font-size:11.01px;line-height:11.01px;color:#333;transform:scaleX(0.9365);">Copilot | Microsoft 365 C...</div>
<div class="t" style="left:266.5px;top:379px;font-size:11.01px;line-height:11.01px;color:#fff;transform:scaleX(0.9366);">Consultation - Samantha</div>
<div class="t" style="left:56.1px;top:514px;font-size:11.01px;line-height:11.01px;color:#333;transform:scaleX(0.8995);">The Verge</div>
<svg class="abs" style="left:36px;top:207px" width="12" height="11" viewBox="0 0 12 11"><rect x=".9" y=".9" width="10" height="7.4" rx="1.5" fill="none" stroke="#3a3a3a" stroke-width="1.15"/><path d="M4.4 8.4 L3.8 9.8 M7.4 8.4 L8 9.8" stroke="#3a3a3a" stroke-width="1"/><rect x="2.6" y="9.6" width="6.6" height="1.1" rx=".5" fill="#3a3a3a"/></svg>
<svg class="abs" style="left:34.5px;top:375.5px" width="15" height="13" viewBox="0 0 15 13">
<defs><linearGradient id="cpa" x1="0" y1="0" x2="0" y2="1"><stop offset="0" stop-color="#1572e8"/><stop offset=".35" stop-color="#12a6d8"/><stop offset=".6" stop-color="#2fc879"/><stop offset="1" stop-color="#e6c72a"/></linearGradient>
<linearGradient id="cpb" x1="0" y1="0" x2="0" y2="1"><stop offset="0" stop-color="#7a5cf0"/><stop offset=".35" stop-color="#c04fd0"/><stop offset=".65" stop-color="#f0507a"/><stop offset="1" stop-color="#f57a30"/></linearGradient></defs>
<path d="M3.2 .5 H8.6 C9.8 .5 10.6 1.1 10.9 2.3 L11.3 3.6 H8.9 C8 3.6 7.5 4 7.2 4.9 L6 9.2 H2.2 C.8 9.2 .2 8.2 .6 6.9 L1.7 2.3 C2 1.2 2.3 .5 3.2 .5Z" fill="url(#cpa)"/>
<path d="M8.7 3.6 L10.2 .6 C11 1 11.4 2 11.6 3.6Z" fill="#2a3fc8"/>
<path d="M9 3.6 H12.8 C14.2 3.6 14.8 4.6 14.4 5.9 L13.3 10.5 C13 11.7 12.3 12.5 11.2 12.5 H6.4 C5.2 12.5 4.5 11.8 4.2 10.6 L4 9.2 H6 C6.9 9.2 7.5 8.7 7.8 7.8Z" fill="url(#cpb)"/>
<path d="M4 9.2 H6 L5.2 11.8 C4.6 11.4 4.2 10.5 4 9.2Z" fill="#e8382c"/>
</svg>
<svg class="abs" style="left:245.6px;top:375.3px" width="14" height="13.5" viewBox="0 0 14 13.5">
<defs><linearGradient id="pca" x1="0" y1="0" x2="1" y2="1"><stop offset="0" stop-color="#f7925c"/><stop offset=".5" stop-color="#ee5f36"/><stop offset="1" stop-color="#de3018"/></linearGradient></defs>
<circle cx="7.3" cy="6.6" r="6.1" fill="url(#pca)"/>
<path d="M7.3 .5 A6.1 6.1 0 0 1 13.4 6.6 H7.3Z" fill="#f9a878" opacity=".55"/>
<rect x=".2" y="3.3" width="7.2" height="7.2" rx="1" fill="#d8321c"/>
<rect x="7.4" y="3.6" width=".7" height="6.8" fill="#8a1a0c" opacity=".35"/>
<text x="2" y="9.1" font-family="Liberation Sans, sans-serif" font-weight="bold" font-size="6.4" fill="#fbe6df">P</text>
</svg>
<svg class="abs" style="left:35.5px;top:510.6px" width="13" height="13" viewBox="0 0 13 13">
<defs><linearGradient id="eda" x1="0" y1="0" x2="1" y2=".3"><stop offset="0" stop-color="#1fa0e8"/><stop offset=".55" stop-color="#22b8b0"/><stop offset="1" stop-color="#3ac45a"/></linearGradient>
<linearGradient id="edb" x1="0" y1="0" x2="0" y2="1"><stop offset="0" stop-color="#1b8fe6"/><stop offset="1" stop-color="#0b6fe0"/></linearGradient></defs>
<circle cx="6.5" cy="6.5" r="6.3" fill="url(#edb)"/>
<path d="M.3 5.8 C.8 2.3 3.6 .2 6.6 .2 C10.4 .2 12.8 3 12.8 5.6 C12.8 7.6 11.4 8.6 9.8 8.6 C8.4 8.6 7.6 8 7.8 7.4 C8.2 6.8 8.3 6.2 7.9 5.6 C7.3 4.8 5.8 4.8 5 5.8 C4 4.4 1.8 4.2 .3 5.8Z" fill="url(#eda)"/>
<path d="M5.3 5.5 C4.2 6.6 4.3 8.6 5.5 10 C6.8 11.4 9.2 11.3 10.6 10.4 C11.4 9.9 12 9.2 12.1 8.8 C10.4 9.7 8.2 9.6 7 8.4 C6.2 7.6 6 6.6 6.4 5.8 C6.1 5.3 5.6 5.3 5.3 5.5Z" fill="#1a1a22"/>
<path d="M3.8 6.6 C3.2 8.8 4.2 11.2 6.6 12.2 C5 12 4 11.2 3.4 10 C3 9 3.2 7.6 3.8 6.6Z" fill="#0b5fd0"/>
<circle cx="7.1" cy="6.5" r="1.25" fill="#fff"/>
</svg>
<svg class="abs" style="left:481px;top:39px" width="16" height="10" viewBox="0 0 16 10"><g stroke="#333" stroke-width="1.1" fill="none" stroke-linecap="round" stroke-linejoin="round"><path d="M7.7 .7 V9.2"/><path d="M.6 4.9 H5.3 M2.4 3 L.6 4.9 L2.4 6.8"/><path d="M10.2 4.9 H14.9 M13.1 3 L14.9 4.9 L13.1 6.8"/></g></svg>
<div class="t" style="left:510.2px;top:40px;font-size:11.74px;line-height:11.74px;color:#242424;transform:scaleX(1.0106);-webkit-text-stroke:.45px #242424;">Preview</div>
<svg class="abs" style="left:860px;top:38px" width="12" height="12" viewBox="0 0 12 12"><path d="M1 1 L11 11 M11 1 L1 11" stroke="#3a3a3a" stroke-width="1" stroke-linecap="round"/></svg>
<svg class="abs" style="left:475px;top:71px" width="13.5" height="13" viewBox="0 0 13.5 13">
<defs><linearGradient id="psa" x1="0" y1="1" x2="1" y2="0"><stop offset="0" stop-color="#e9402a"/><stop offset=".55" stop-color="#f0643e"/><stop offset="1" stop-color="#f9a664"/></linearGradient></defs>
<rect x=".6" y=".2" width="12.6" height="12.5" rx=".8" fill="url(#psa)"/>
<path d="M6.8 .2 H13.2 V5.4 H6.8Z" fill="#f8a868" opacity=".6"/>
<path d="M8.6 1 L11.6 3" stroke="#f6c84a" stroke-width=".9" opacity=".8"/>
<rect x="7" y="6.2" width="5.8" height="5.8" fill="#ea4a36" opacity=".85"/>
<rect x=".2" y="1.6" width="6.4" height="9.7" rx=".6" fill="#d8301e"/>
<text x="1.7" y="9.2" font-family="Liberation Sans, sans-serif" font-weight="bold" font-size="6.6" fill="#fbe4dc">P</text>
</svg>
<div class="t" style="left:495.8px;top:74px;font-size:11.01px;line-height:11.01px;color:#333;transform:scaleX(0.9341);">Consultation - Samantha</div>
<div class="abs" style="left:474.7px;top:93.8px;width:405.3px;height:220.2px;border-radius:4.5px;box-shadow:0 1px 3px rgba(0,0,0,.22),0 0 1px rgba(0,0,0,.2)"></div>
<div class="abs" style="left:474.7px;top:93.8px;width:405.3px;height:220.2px;border-radius:4.5px;overflow:hidden;background:#ececec"><svg style="display:block" width="405.3" height="220.2" viewBox="0 0 405 220" preserveAspectRatio="none">
<rect x="0" y="28.8" width="405" height="192" fill="#ececec"/>
<rect x="0" y="28.8" width="66.5" height="192" fill="#e3e3e2"/>
<rect x="66.3" y="28.8" width=".5" height="192" fill="#dadada"/>
<rect x="66.5" y="207.2" width="339" height=".5" fill="#d2d2d2"/>
<rect x="66.8" y="207.7" width="339" height="14" fill="#eeeeee"/>
<g font-family="Liberation Sans, sans-serif">
<text x="69.3" y="214.2" font-size="3.6" fill="#222" font-weight="bold" textLength="27.6" lengthAdjust="spacingAndGlyphs" >Click to add notes</text>
<text x="2.6" y="36" font-size="3.2" fill="#666" >1</text>
</g>
<rect x="7.3" y="30.8" width="55.4" height="32.4" rx="1" fill="#c9563c"/>
<svg x="8.1" y="31.6" width="53.8" height="30.8" viewBox="0 0 257 144.5" preserveAspectRatio="none">
<g filter="url(#bl3)">
<rect x="-3" y="-3" width="263" height="151" fill="#443832"/>
<rect x="-3" y="-3" width="120" height="80" fill="#4d332a"/>
<rect x="0" y="10" width="24" height="24" fill="#6a4236"/>
<rect x="25" y="12" width="90" height="42" fill="#5b463f"/>
<rect x="25" y="56" width="90" height="22" fill="#3a2b27"/>
<rect x="25" y="16" width="90" height=".7" fill="#3e2e29" opacity=".6"/>
<rect x="25" y="20" width="90" height=".7" fill="#3e2e29" opacity=".6"/>
<rect x="25" y="24" width="90" height=".7" fill="#3e2e29" opacity=".6"/>
<rect x="25" y="28" width="90" height=".7" fill="#3e2e29" opacity=".6"/>
<rect x="25" y="32" width="90" height=".7" fill="#3e2e29" opacity=".6"/>
<rect x="25" y="36" width="90" height=".7" fill="#3e2e29" opacity=".6"/>
<rect x="0" y="4" width="21" height=".7" fill="#3e2620" opacity=".6"/>
<rect x="0" y="8" width="21" height=".7" fill="#3e2620" opacity=".6"/>
<rect x="0" y="12" width="21" height=".7" fill="#3e2620" opacity=".6"/>
<rect x="0" y="16" width="21" height=".7" fill="#3e2620" opacity=".6"/>
<rect x="0" y="20" width="21" height=".7" fill="#3e2620" opacity=".6"/>
<rect x="0" y="24" width="21" height=".7" fill="#3e2620" opacity=".6"/>
<rect x="0" y="28" width="21" height=".7" fill="#3e2620" opacity=".6"/>
<rect x="39.5" y="-1" width="26" height="9.5" fill="#8f7261"/>
<rect x="81" y="-1" width="31" height="12.5" fill="#8a6c5b"/>
<rect x="21.5" y="0" width="3.5" height="70" fill="#1f1a19"/>
<rect x="25" y="7.5" width="89" height="4.5" fill="#241d1b"/>
<rect x="112" y="0" width="3" height="26" fill="#221c1b"/>
<rect x="0" y="53" width="115" height="3" fill="#2a211f"/>
<rect x="1" y="43" width="17.5" height="9" fill="#8b6554"/>
<rect x="31.7" y="41.6" width="14" height="11.5" fill="#927562"/>
<rect x="47" y="42" width="8" height="11" fill="#86695a"/>
<rect x="83" y="43.5" width="22" height="10.5" fill="#7d6152"/>
<ellipse cx="12.5" cy="36" rx="7.5" ry="6" fill="#c08545"/>
<ellipse cx="4" cy="34" rx="4" ry="5" fill="#a9958a"/>
<ellipse cx="43" cy="33.5" rx="8" ry="6.5" fill="#a88f86"/>
<ellipse cx="49" cy="38" rx="3" ry="8" fill="#5b7046"/>
<ellipse cx="95" cy="34" rx="9" ry="7" fill="#b3978a"/>
<ellipse cx="96" cy="42" rx="7" ry="3" fill="#5d7347"/>
<rect x="85" y="52" width="3" height="20" fill="#55703f"/>
<rect x="115" y="-1" width="40" height="80" fill="#48403b"/>
<rect x="134" y="24" width="17" height="48" fill="#7d7c75"/>
<rect x="150" y="-3" width="110" height="130" fill="#787e80"/>
<rect x="226" y="-3" width="34" height="130" fill="#8a8f8e"/>
<polygon points="154,34 214,7 214,-3 154,-3" fill="#6a7072"/>
<rect x="150.5" y="18" width="3.8" height="130" fill="#23252a"/>
<rect x="159.2" y="2" width="1.2" height="90" fill="#2a2c30"/>
<rect x="173.8" y="-2" width="1.4" height="80" fill="#2a2c30"/>
<rect x="191" y="-2" width="1.6" height="66" fill="#2a2c30"/>
<rect x="213.9" y="-3" width="11.7" height="125" fill="#24252b"/>
<rect x="254.8" y="-3" width="3" height="150" fill="#2a2a2e"/>
<polygon points="152,31.6 214,5 214,7.2 152,33.8" fill="#25272b"/>
<polygon points="152,58.8 192,47.8 192,49.8 152,60.8" fill="#25272b"/>
<polygon points="152,86 175,80 175,82 152,88" fill="#25272b"/>
<rect x="225" y="82.5" width="32" height="2.6" fill="#26282c"/>
<rect x="225" y="36" width="32" height="1.4" fill="#4a4d50" opacity=".5"/>
<rect x="124" y="-2" width="9" height="40" fill="#4c6a3c"/>
<rect x="134" y="-2" width="8" height="48" fill="#58744a" opacity=".85"/>
<rect x="143" y="-2" width="8" height="30" fill="#47623a"/>
<rect x="128" y="-2" width="26" height="14" fill="#4b6b3a"/>
<rect x="127" y="8" width="1.3" height="34" fill="#3c3a33" opacity=".55"/>
<rect x="131.5" y="8" width="1.3" height="34" fill="#3c3a33" opacity=".55"/>
<rect x="136" y="8" width="1.3" height="34" fill="#3c3a33" opacity=".55"/>
<rect x="140.5" y="8" width="1.3" height="34" fill="#3c3a33" opacity=".55"/>
<rect x="145" y="8" width="1.3" height="34" fill="#3c3a33" opacity=".55"/>
<rect x="149" y="8" width="1.3" height="34" fill="#3c3a33" opacity=".55"/>
<path d="M152 2 C166 10 172 30 171 62" stroke="#5f7a4c" stroke-width="2.4" fill="none"/>
<path d="M150 6 C158 20 160 30 159 44" stroke="#56703f" stroke-width="1.8" fill="none"/>
<path d="M226 0 C240 14 248 50 247 100 C247 120 250 130 251 140" stroke="#55703e" stroke-width="1.8" fill="none"/>
<ellipse cx="240" cy="25" rx="4.5" ry="5" fill="#bb8871"/>
<ellipse cx="244" cy="37" rx="5" ry="5.5" fill="#c08c74"/>
<ellipse cx="247" cy="50" rx="3" ry="5" fill="#b78a74"/>
<ellipse cx="186" cy="73" rx="26" ry="15" fill="#c4906f"/>
<ellipse cx="200" cy="76" rx="10" ry="9" fill="#d3a58c"/>
<ellipse cx="172" cy="68" rx="8" ry="6" fill="#c77f55"/>
<polygon points="168,84 202,84 194,110 176,110" fill="#343d2b"/>
<ellipse cx="190" cy="109" rx="24" ry="10" fill="#44548f"/>
<ellipse cx="225" cy="103" rx="21" ry="10" fill="#4a5ca5"/>
<ellipse cx="206" cy="104" rx="7" ry="6" fill="#b79886"/>
<ellipse cx="232" cy="116" rx="13" ry="4" fill="#4e6a3e"/>
<ellipse cx="233" cy="126" rx="25" ry="8" fill="#c8682f"/>
<ellipse cx="250" cy="130" rx="9" ry="9" fill="#cf6f38"/>
<rect x="214" y="131" width="40" height="10" fill="#262826"/>
<ellipse cx="222" cy="141" rx="14" ry="5" fill="#c76027"/>
<ellipse cx="250" cy="143" rx="6" ry="4" fill="#c9a090"/>
<ellipse cx="186" cy="130" rx="24" ry="10" fill="#b49689"/>
<ellipse cx="168" cy="134" rx="14" ry="8" fill="#a9806d"/>
<ellipse cx="190" cy="140" rx="20" ry="6" fill="#b8917e"/>
<ellipse cx="150" cy="141" rx="12" ry="4" fill="#50683d"/>
<ellipse cx="5" cy="76" rx="7" ry="7" fill="#b08f80"/>
<ellipse cx="3" cy="99" rx="5" ry="8" fill="#b5713c"/>
<ellipse cx="4" cy="137" rx="6" ry="6" fill="#a27a68"/>
<rect x="-2" y="108" width="9" height="22" fill="#3c2a22"/>
<path d="M95 80 C104 68 132 68 142 80 L146 130 L140 146 L92 146 Z" fill="#6f7f98"/>
<path d="M127 80 C140 84 145 100 146 128 L132 132 Z" fill="#7a8aa2"/>
<path d="M98 92 L128 92 L132 146 L92 146 Z" fill="#4d281e"/>
<path d="M100 64 L104 92 L99 92 L96 70 Z" fill="#5a2f22"/>
<path d="M127 66 L130 92 L125 92 L123 70 Z" fill="#5a2f22"/>
<ellipse cx="156" cy="118" rx="12" ry="10" fill="#95664f"/>
<rect x="110" y="58" width="14" height="14" fill="#8f6650"/>
<ellipse cx="117.5" cy="50" rx="11.5" ry="14.5" fill="#a1775f"/>
<path d="M103.5 46 C101 30 112 24.5 121 25.5 C132 26.5 136 36 133.5 49 C131 42 127 37 121 36.5 C113 36 108 38 105.5 50 Z" fill="#1f1917"/>
<path d="M110 56 C114 60 121 60 125 56 C123 63 113 63 110 56Z" fill="#e2d2c8"/>
<ellipse cx="112.5" cy="47.5" rx="2.2" ry=".8" fill="#2a1c18"/><ellipse cx="123" cy="47.5" rx="2.2" ry=".8" fill="#2a1c18"/>
<path d="M109.5 45 l5.5 -.6 M120 44.4 l5.5 .6" stroke="#2a1c18" stroke-width="1"/>
<path d="M117.5 47 l-.8 5.5 l2.6 .2" stroke="#7d5542" stroke-width=".9" fill="none"/>
<path d="M107 57 C110 68 125 68 128 56 C126 64 122 66 117.5 66.5 C112 66 109 63 107 57Z" fill="#3a2a24"/>
<path d="M6 92 C10 72 34 64 48 62 L84 66 C92 74 94 100 93 126 L78 134 L24 134 L4 120 Z" fill="#7c8798"/>
<path d="M40 62 L56 84 L72 64 Z" fill="#8a93a0"/>
<path d="M4 104 C8 98 20 100 24 106 L22 124 L6 122 Z" fill="#8792a2"/>
<path d="M76 96 L93 100 L92 128 L78 124 Z" fill="#8691a1"/>
<rect x="25" y="133" width="52" height="14" fill="#272322"/>
<path d="M8 122 L22 124 L30 146 L14 146 Z" fill="#9a6e58"/>
<path d="M74 126 L90 128 L92 146 L80 146 Z" fill="#94674f"/>
<path d="M58 56 L74 58 L72 72 L58 74 Z" fill="#9b715c"/>
<ellipse cx="66.5" cy="44" rx="13" ry="16.5" fill="#b88d75"/>
<path d="M52.5 44 C49 26 58 18 70 18 C84 18 90 28 85.5 46 C83 38 80 33 74 31.5 C68 34 60 36 56.5 37 C55 40 54.5 44 54 49 Z" fill="#1d1817"/>
<path d="M61 52 C65 55.5 72 54.5 76 50 C75 58 64 60 61 52Z" fill="#e9dbd2"/>
<ellipse cx="61.5" cy="42.5" rx="2.2" ry=".9" fill="#2a1c18"/><ellipse cx="72.5" cy="40.5" rx="2.2" ry=".9" fill="#2a1c18"/>
<path d="M58.5 40 l5 -1 M69.5 38 l5.5 -.8" stroke="#2a1c18" stroke-width="1"/>
<path d="M66.5 43 l-1.5 5.5 l3 .3" stroke="#8a5f4b" stroke-width=".9" fill="none"/>
<ellipse cx="72" cy="46" rx="5" ry="6" fill="#c39a84" opacity=".5"/>
<rect x="-3" y="-3" width="263" height="151" fill="#1a1210" opacity=".17"/>
</g>
<rect width="257" height="144.5" fill="#1a1210" opacity=".25"/>
<g font-family="Liberation Sans, sans-serif" font-size="28.3" fill="#d9d5d2" fill-opacity=".62">
<text x="23" y="83.6" textLength="165" lengthAdjust="spacingAndGlyphs">Bloom Florist</text>
<text x="23" y="117.3" textLength="158.5" lengthAdjust="spacingAndGlyphs">Consultation</text></g>
</svg>
<rect x="109.5" y="36.3" width="6" height="6" rx="1" fill="#fbfbfb" stroke="#e2e2e2" stroke-width=".3"/>
<circle cx="112.5" cy="38.3" r=".8" fill="#444"/><path d="M110.9 41.2 c0 -2 3.2 -2 3.2 0z" fill="#444"/>
<rect x="107" y="45.6" width="258.4" height="145.6" fill="#d9d9d9"/>
<svg x="107.5" y="46" width="257.4" height="144.7" viewBox="0 0 257 144.5" preserveAspectRatio="none">
<g filter="url(#bl1)">
<rect x="-3" y="-3" width="263" height="151" fill="#443832"/>
<rect x="-3" y="-3" width="120" height="80" fill="#4d332a"/>
<rect x="0" y="10" width="24" height="24" fill="#6a4236"/>
<rect x="25" y="12" width="90" height="42" fill="#5b463f"/>
<rect x="25" y="56" width="90" height="22" fill="#3a2b27"/>
<rect x="25" y="16" width="90" height=".7" fill="#3e2e29" opacity=".6"/>
<rect x="25" y="20" width="90" height=".7" fill="#3e2e29" opacity=".6"/>
<rect x="25" y="24" width="90" height=".7" fill="#3e2e29" opacity=".6"/>
<rect x="25" y="28" width="90" height=".7" fill="#3e2e29" opacity=".6"/>
<rect x="25" y="32" width="90" height=".7" fill="#3e2e29" opacity=".6"/>
<rect x="25" y="36" width="90" height=".7" fill="#3e2e29" opacity=".6"/>
<rect x="0" y="4" width="21" height=".7" fill="#3e2620" opacity=".6"/>
<rect x="0" y="8" width="21" height=".7" fill="#3e2620" opacity=".6"/>
<rect x="0" y="12" width="21" height=".7" fill="#3e2620" opacity=".6"/>
<rect x="0" y="16" width="21" height=".7" fill="#3e2620" opacity=".6"/>
<rect x="0" y="20" width="21" height=".7" fill="#3e2620" opacity=".6"/>
<rect x="0" y="24" width="21" height=".7" fill="#3e2620" opacity=".6"/>
<rect x="0" y="28" width="21" height=".7" fill="#3e2620" opacity=".6"/>
<rect x="39.5" y="-1" width="26" height="9.5" fill="#8f7261"/>
<rect x="81" y="-1" width="31" height="12.5" fill="#8a6c5b"/>
<rect x="21.5" y="0" width="3.5" height="70" fill="#1f1a19"/>
<rect x="25" y="7.5" width="89" height="4.5" fill="#241d1b"/>
<rect x="112" y="0" width="3" height="26" fill="#221c1b"/>
<rect x="0" y="53" width="115" height="3" fill="#2a211f"/>
<rect x="1" y="43" width="17.5" height="9" fill="#8b6554"/>
<rect x="31.7" y="41.6" width="14" height="11.5" fill="#927562"/>
<rect x="47" y="42" width="8" height="11" fill="#86695a"/>
<rect x="83" y="43.5" width="22" height="10.5" fill="#7d6152"/>
<ellipse cx="12.5" cy="36" rx="7.5" ry="6" fill="#c08545"/>
<ellipse cx="4" cy="34" rx="4" ry="5" fill="#a9958a"/>
<ellipse cx="43" cy="33.5" rx="8" ry="6.5" fill="#a88f86"/>
<ellipse cx="49" cy="38" rx="3" ry="8" fill="#5b7046"/>
<ellipse cx="95" cy="34" rx="9" ry="7" fill="#b3978a"/>
<ellipse cx="96" cy="42" rx="7" ry="3" fill="#5d7347"/>
<rect x="85" y="52" width="3" height="20" fill="#55703f"/>
<rect x="115" y="-1" width="40" height="80" fill="#48403b"/>
<rect x="134" y="24" width="17" height="48" fill="#7d7c75"/>
<rect x="150" y="-3" width="110" height="130" fill="#787e80"/>
<rect x="226" y="-3" width="34" height="130" fill="#8a8f8e"/>
<polygon points="154,34 214,7 214,-3 154,-3" fill="#6a7072"/>
<rect x="150.5" y="18" width="3.8" height="130" fill="#23252a"/>
<rect x="159.2" y="2" width="1.2" height="90" fill="#2a2c30"/>
<rect x="173.8" y="-2" width="1.4" height="80" fill="#2a2c30"/>
<rect x="191" y="-2" width="1.6" height="66" fill="#2a2c30"/>
<rect x="213.9" y="-3" width="11.7" height="125" fill="#24252b"/>
<rect x="254.8" y="-3" width="3" height="150" fill="#2a2a2e"/>
<polygon points="152,31.6 214,5 214,7.2 152,33.8" fill="#25272b"/>
<polygon points="152,58.8 192,47.8 192,49.8 152,60.8" fill="#25272b"/>
<polygon points="152,86 175,80 175,82 152,88" fill="#25272b"/>
<rect x="225" y="82.5" width="32" height="2.6" fill="#26282c"/>
<rect x="225" y="36" width="32" height="1.4" fill="#4a4d50" opacity=".5"/>
<rect x="124" y="-2" width="9" height="40" fill="#4c6a3c"/>
<rect x="134" y="-2" width="8" height="48" fill="#58744a" opacity=".85"/>
<rect x="143" y="-2" width="8" height="30" fill="#47623a"/>
<rect x="128" y="-2" width="26" height="14" fill="#4b6b3a"/>
<rect x="127" y="8" width="1.3" height="34" fill="#3c3a33" opacity=".55"/>
<rect x="131.5" y="8" width="1.3" height="34" fill="#3c3a33" opacity=".55"/>
<rect x="136" y="8" width="1.3" height="34" fill="#3c3a33" opacity=".55"/>
<rect x="140.5" y="8" width="1.3" height="34" fill="#3c3a33" opacity=".55"/>
<rect x="145" y="8" width="1.3" height="34" fill="#3c3a33" opacity=".55"/>
<rect x="149" y="8" width="1.3" height="34" fill="#3c3a33" opacity=".55"/>
<path d="M152 2 C166 10 172 30 171 62" stroke="#5f7a4c" stroke-width="2.4" fill="none"/>
<path d="M150 6 C158 20 160 30 159 44" stroke="#56703f" stroke-width="1.8" fill="none"/>
<path d="M226 0 C240 14 248 50 247 100 C247 120 250 130 251 140" stroke="#55703e" stroke-width="1.8" fill="none"/>
<ellipse cx="240" cy="25" rx="4.5" ry="5" fill="#bb8871"/>
<ellipse cx="244" cy="37" rx="5" ry="5.5" fill="#c08c74"/>
<ellipse cx="247" cy="50" rx="3" ry="5" fill="#b78a74"/>
<ellipse cx="186" cy="73" rx="26" ry="15" fill="#c4906f"/>
<ellipse cx="200" cy="76" rx="10" ry="9" fill="#d3a58c"/>
<ellipse cx="172" cy="68" rx="8" ry="6" fill="#c77f55"/>
<polygon points="168,84 202,84 194,110 176,110" fill="#343d2b"/>
<ellipse cx="190" cy="109" rx="24" ry="10" fill="#44548f"/>
<ellipse cx="225" cy="103" rx="21" ry="10" fill="#4a5ca5"/>
<ellipse cx="206" cy="104" rx="7" ry="6" fill="#b79886"/>
<ellipse cx="232" cy="116" rx="13" ry="4" fill="#4e6a3e"/>
<ellipse cx="233" cy="126" rx="25" ry="8" fill="#c8682f"/>
<ellipse cx="250" cy="130" rx="9" ry="9" fill="#cf6f38"/>
<rect x="214" y="131" width="40" height="10" fill="#262826"/>
<ellipse cx="222" cy="141" rx="14" ry="5" fill="#c76027"/>
<ellipse cx="250" cy="143" rx="6" ry="4" fill="#c9a090"/>
<ellipse cx="186" cy="130" rx="24" ry="10" fill="#b49689"/>
<ellipse cx="168" cy="134" rx="14" ry="8" fill="#a9806d"/>
<ellipse cx="190" cy="140" rx="20" ry="6" fill="#b8917e"/>
<ellipse cx="150" cy="141" rx="12" ry="4" fill="#50683d"/>
<ellipse cx="5" cy="76" rx="7" ry="7" fill="#b08f80"/>
<ellipse cx="3" cy="99" rx="5" ry="8" fill="#b5713c"/>
<ellipse cx="4" cy="137" rx="6" ry="6" fill="#a27a68"/>
<rect x="-2" y="108" width="9" height="22" fill="#3c2a22"/>
<path d="M95 80 C104 68 132 68 142 80 L146 130 L140 146 L92 146 Z" fill="#6f7f98"/>
<path d="M127 80 C140 84 145 100 146 128 L132 132 Z" fill="#7a8aa2"/>
<path d="M98 92 L128 92 L132 146 L92 146 Z" fill="#4d281e"/>
<path d="M100 64 L104 92 L99 92 L96 70 Z" fill="#5a2f22"/>
<path d="M127 66 L130 92 L125 92 L123 70 Z" fill="#5a2f22"/>
<ellipse cx="156" cy="118" rx="12" ry="10" fill="#95664f"/>
<rect x="110" y="58" width="14" height="14" fill="#8f6650"/>
<ellipse cx="117.5" cy="50" rx="11.5" ry="14.5" fill="#a1775f"/>
<path d="M103.5 46 C101 30 112 24.5 121 25.5 C132 26.5 136 36 133.5 49 C131 42 127 37 121 36.5 C113 36 108 38 105.5 50 Z" fill="#1f1917"/>
<path d="M110 56 C114 60 121 60 125 56 C123 63 113 63 110 56Z" fill="#e2d2c8"/>
<ellipse cx="112.5" cy="47.5" rx="2.2" ry=".8" fill="#2a1c18"/><ellipse cx="123" cy="47.5" rx="2.2" ry=".8" fill="#2a1c18"/>
<path d="M109.5 45 l5.5 -.6 M120 44.4 l5.5 .6" stroke="#2a1c18" stroke-width="1"/>
<path d="M117.5 47 l-.8 5.5 l2.6 .2" stroke="#7d5542" stroke-width=".9" fill="none"/>
<path d="M107 57 C110 68 125 68 128 56 C126 64 122 66 117.5 66.5 C112 66 109 63 107 57Z" fill="#3a2a24"/>
<path d="M6 92 C10 72 34 64 48 62 L84 66 C92 74 94 100 93 126 L78 134 L24 134 L4 120 Z" fill="#7c8798"/>
<path d="M40 62 L56 84 L72 64 Z" fill="#8a93a0"/>
<path d="M4 104 C8 98 20 100 24 106 L22 124 L6 122 Z" fill="#8792a2"/>
<path d="M76 96 L93 100 L92 128 L78 124 Z" fill="#8691a1"/>
<rect x="25" y="133" width="52" height="14" fill="#272322"/>
<path d="M8 122 L22 124 L30 146 L14 146 Z" fill="#9a6e58"/>
<path d="M74 126 L90 128 L92 146 L80 146 Z" fill="#94674f"/>
<path d="M58 56 L74 58 L72 72 L58 74 Z" fill="#9b715c"/>
<ellipse cx="66.5" cy="44" rx="13" ry="16.5" fill="#b88d75"/>
<path d="M52.5 44 C49 26 58 18 70 18 C84 18 90 28 85.5 46 C83 38 80 33 74 31.5 C68 34 60 36 56.5 37 C55 40 54.5 44 54 49 Z" fill="#1d1817"/>
<path d="M61 52 C65 55.5 72 54.5 76 50 C75 58 64 60 61 52Z" fill="#e9dbd2"/>
<ellipse cx="61.5" cy="42.5" rx="2.2" ry=".9" fill="#2a1c18"/><ellipse cx="72.5" cy="40.5" rx="2.2" ry=".9" fill="#2a1c18"/>
<path d="M58.5 40 l5 -1 M69.5 38 l5.5 -.8" stroke="#2a1c18" stroke-width="1"/>
<path d="M66.5 43 l-1.5 5.5 l3 .3" stroke="#8a5f4b" stroke-width=".9" fill="none"/>
<ellipse cx="72" cy="46" rx="5" ry="6" fill="#c39a84" opacity=".5"/>
<rect x="-3" y="-3" width="263" height="151" fill="#1a1210" opacity=".17"/>
</g>
<g font-family="Liberation Sans, sans-serif" font-size="29.7" fill="#3a3634" fill-opacity=".2" stroke="#fff" stroke-width=".85" stroke-opacity=".88" opacity=".99">
<text x="22.1" y="84.1" textLength="166.5" lengthAdjust="spacingAndGlyphs">Bloom Florist</text>
<text x="22.1" y="117.8" textLength="161" lengthAdjust="spacingAndGlyphs">Consultation</text>
</g>
</svg>
<rect x="0" y="0" width="405" height="28.6" fill="#f6f6f6"/>
<rect x="0" y="0" width="405" height="9.3" fill="#f3f3f3"/>
<rect x="0" y="28.3" width="405" height=".6" fill="#dedede"/>
<g font-family="Liberation Sans, sans-serif">
<text x="2.3" y="6.8" font-size="4.2" fill="#2b2b2b" font-weight="bold" textLength="10.5" lengthAdjust="spacingAndGlyphs" >Home</text>
<text x="19.2" y="6.8" font-size="4.2" fill="#2b2b2b" font-weight="bold" textLength="8.9" lengthAdjust="spacingAndGlyphs" >Insert</text>
<text x="34.9" y="6.8" font-size="4.2" fill="#2b2b2b" font-weight="bold" textLength="8.2" lengthAdjust="spacingAndGlyphs" >Draw</text>
<text x="50.1" y="6.8" font-size="4.2" fill="#2b2b2b" font-weight="bold" textLength="10.9" lengthAdjust="spacingAndGlyphs" >Design</text>
<text x="68.5" y="6.8" font-size="4.2" fill="#2b2b2b" font-weight="bold" textLength="17.9" lengthAdjust="spacingAndGlyphs" >Transitions</text>
<text x="94.2" y="6.8" font-size="4.2" fill="#2b2b2b" font-weight="bold" textLength="18" lengthAdjust="spacingAndGlyphs" >Animations</text>
<text x="119.3" y="6.8" font-size="4.2" fill="#2b2b2b" font-weight="bold" textLength="18" lengthAdjust="spacingAndGlyphs" >Slide Show</text>
<text x="144" y="6.8" font-size="4.2" fill="#2b2b2b" font-weight="bold" textLength="11.6" lengthAdjust="spacingAndGlyphs" >Record</text>
<text x="161.9" y="6.8" font-size="4.2" fill="#2b2b2b" font-weight="bold" textLength="12.3" lengthAdjust="spacingAndGlyphs" >Review</text>
<text x="180.3" y="6.8" font-size="4.2" fill="#2b2b2b" font-weight="bold" textLength="7.8" lengthAdjust="spacingAndGlyphs" >View</text>
<rect x="2" y="8.2" width="11.2" height=".8" fill="#c43e1c"/>
<rect x="323.3" y="3" width="20.5" height="5.4" rx="1.2" fill="#fff" stroke="#e3e3e3" stroke-width=".3"/>
<circle cx="327" cy="5.7" r="1.5" fill="none" stroke="#222" stroke-width=".5"/><circle cx="327" cy="5.7" r=".8" fill="#222"/>
<text x="330" y="7" font-size="3.6" fill="#2b2b2b" font-weight="bold" textLength="12.5" lengthAdjust="spacingAndGlyphs" >Record</text>
<rect x="348.4" y="3" width="26" height="5.4" rx="1.2" fill="#fff" stroke="#e3e3e3" stroke-width=".3"/>
<rect x="350.2" y="4.2" width="3.2" height="2.6" rx=".8" fill="none" stroke="#333" stroke-width=".45"/>
<text x="354.5" y="7" font-size="3.6" fill="#2b2b2b" font-weight="bold" textLength="18.5" lengthAdjust="spacingAndGlyphs" >Comments</text>
<rect x="377.9" y="3" width="24" height="5.6" rx="1.3" fill="#c43e1c"/>
<rect x="380" y="4.3" width="2.8" height="2.8" fill="none" stroke="#f6d3c9" stroke-width=".45"/>
<text x="384.3" y="7.1" font-size="3.7" fill="#fbe9e4" font-weight="bold" textLength="11" lengthAdjust="spacingAndGlyphs" >Share</text>
<path d="M397.5 5.2 l1 1 l1 -1" stroke="#f3c6b9" stroke-width=".4" fill="none"/>
<rect x="4.2" y="13.3" width="5.6" height="7" rx=".8" fill="#fbe9cf" stroke="#d8923a" stroke-width=".55"/>
<rect x="5.8" y="12.4" width="2.6" height="1.6" rx=".5" fill="#f6f6f6" stroke="#8a8a8a" stroke-width=".4"/>
<rect x="7.4" y="15.2" width="4.6" height="5.6" rx=".6" fill="#fafafa" stroke="#8d8d8d" stroke-width=".5"/>
<text x="4.7" y="24.2" font-size="3.5" fill="#2b2b2b" font-weight="bold" textLength="7.6" lengthAdjust="spacingAndGlyphs" >Paste</text>
<path d="M13 15.8 l.9 .9 l.9 -.9" stroke="#777" stroke-width=".35" fill="none"/>
<g stroke="#b9b9c6" stroke-width=".45" fill="none"><path d="M17.4 12.6 l2 3.4 M19.4 12.6 l-2 3.4"/><rect x="17" y="17.8" width="2.2" height="2.8"/><rect x="18" y="18.6" width="2.2" height="2.8"/><path d="M22 19.8 l.8 .8 l.8 -.8"/></g>
<path d="M17.2 25.8 l2.8 -2.6 l.8 .8 z" fill="#f0b9a8" stroke="#e9957f" stroke-width=".3"/>
<rect x="27.2" y="11.5" width=".4" height="16" fill="#dcdcdc"/>
<rect x="31.2" y="13.2" width="8" height="6" rx=".6" fill="#fafafa" stroke="#555" stroke-width=".55"/>
<path d="M31.2 15 h8 M34 15 v4.2" stroke="#666" stroke-width=".4"/>
<path d="M32.6 11.6 v2.6 M31.3 12.9 h2.6" stroke="#3a9a50" stroke-width=".6"/>
<path d="M41.2 16 l.9 .9 l.9 -.9" stroke="#666" stroke-width=".35" fill="none"/>
<text x="35.4" y="24" font-size="3.4" fill="#2b2b2b" font-weight="bold" textLength="6.2" lengthAdjust="spacingAndGlyphs" text-anchor="middle" >New</text>
<text x="35.4" y="27.2" font-size="3.4" fill="#2b2b2b" font-weight="bold" textLength="6.6" lengthAdjust="spacingAndGlyphs" text-anchor="middle" >Slide</text>
<rect x="48.5" y="12.8" width="8" height="6.2" rx=".6" fill="#fafafa" stroke="#444" stroke-width=".6"/>
<rect x="50" y="14.3" width="5" height="2.6" fill="none" stroke="#777" stroke-width=".35"/>
<path d="M55 16.5 l1.6 2.8 l-1.8 -.2z" fill="#e2452d"/>
<text x="52.2" y="24" font-size="3.4" fill="#2b2b2b" font-weight="bold" textLength="13.5" lengthAdjust="spacingAndGlyphs" text-anchor="middle" >New Slide</text>
<text x="52.2" y="27.2" font-size="3.4" fill="#2b2b2b" font-weight="bold" textLength="16.4" lengthAdjust="spacingAndGlyphs" text-anchor="middle" >with Copilot</text>
<g fill="#fafafa" stroke="#3d4b63" stroke-width=".5"><rect x="62.3" y="12.2" width="3.8" height="3"/><rect x="62.3" y="17.6" width="3.8" height="3" stroke="#2b6fc2"/><rect x="62.3" y="23.2" width="3.8" height="3.2"/></g>
<path d="M67.6 13.4 l.8 .8 l.8 -.8 M67.6 24.6 l.8 .8 l.8 -.8" stroke="#444" stroke-width=".4" fill="none"/>
<rect x="62.3" y="22.8" width="3.8" height=".7" fill="#3a9a50"/>
<rect x="72.5" y="11.5" width=".4" height="16" fill="#dcdcdc"/>
<rect x="76.5" y="12.8" width="45.5" height="5.6" rx=".6" fill="#fff" stroke="#e6e6e6" stroke-width=".3"/>
<text x="78" y="17" font-size="3.3" fill="#a9a9a9" font-weight="bold" textLength="37" lengthAdjust="spacingAndGlyphs" >Aptos Display (Headings)</text>
<path d="M118.2 15.2 l.9 .9 l.9 -.9" stroke="#999" stroke-width=".35" fill="none"/>
<rect x="123.5" y="12.8" width="12.2" height="5.6" rx=".6" fill="#fff" stroke="#e6e6e6" stroke-width=".3"/>
<text x="125" y="17" font-size="3.3" fill="#a9a9a9" font-weight="bold" textLength="5" lengthAdjust="spacingAndGlyphs" >115</text>
<path d="M132.4 15.2 l.9 .9 l.9 -.9" stroke="#999" stroke-width=".35" fill="none"/>
<text x="138.6" y="17.2" font-size="4" fill="#b7b7c2" >A</text>
<text x="145.6" y="17.2" font-size="3.4" fill="#b7b7c2" >A</text>
<rect x="153.6" y="12.5" width=".35" height="6" fill="#dcdcdc"/>
<text x="156.6" y="17.2" font-size="3.6" fill="#b9b9cc" >A</text>
<path d="M158.8 17.6 l1.8 -2" stroke="#c9b4d8" stroke-width=".5"/>
<text x="78.5" y="25.6" font-size="3.6" fill="#b5b5b5" font-weight="bold">B</text>
<text x="85.1" y="25.6" font-size="3.6" fill="#b5b5b5" font-style="italic">I</text>
<text x="91.5" y="25.6" font-size="3.6" fill="#b5b5b5" text-decoration="underline">U</text>
<text x="98.1" y="25.6" font-size="3.6" fill="#b5b5b5" >ab</text>
<text x="106.1" y="25.6" font-size="3.6" fill="#b5b5b5" >x</text>
<text x="112.7" y="25.6" font-size="3.6" fill="#b5b5b5" >x</text>
<text x="119.3" y="25.6" font-size="3.6" fill="#b5b5b5" >AV</text>
<text x="127.9" y="25.6" font-size="3.6" fill="#b5b5b5" >Aa</text>
<path d="M143.6 26.4 l2.8 -3 l1 .9 l-2.9 2.8z" fill="#f0d9a0"/><rect x="143.2" y="26.6" width="4.4" height=".8" fill="#e8c24a"/>
<path d="M149.8 24.8 l.8 .8 l.8 -.8" stroke="#aaa" stroke-width=".35" fill="none"/>
<text x="154.2" y="25.8" font-size="3.8" fill="#e9a69a" >A</text>
<rect x="153.7" y="26.6" width="3.8" height=".8" fill="#e0533c"/>
<path d="M159.6 24.8 l.8 .8 l.8 -.8" stroke="#aaa" stroke-width=".35" fill="none"/>
<rect x="165.6" y="11.5" width=".4" height="16" fill="#dcdcdc"/>
<g>
<rect x="171" y="13.6" width="3.2" height=".5" fill="#b6c2dc"/><rect x="171" y="15.1" width="3.2" height=".5" fill="#b6c2dc"/><rect x="171" y="16.6" width="3.2" height=".5" fill="#b6c2dc"/>
<rect x="169.2" y="13.4" width=".8" height=".8" fill="#7d9bd6"/><rect x="169.2" y="14.9" width=".8" height=".8" fill="#7d9bd6"/><rect x="169.2" y="16.4" width=".8" height=".8" fill="#7d9bd6"/>
<rect x="180.6" y="13.6" width="3.2" height=".5" fill="#b6c2dc"/><rect x="180.6" y="15.1" width="3.2" height=".5" fill="#b6c2dc"/><rect x="180.6" y="16.6" width="3.2" height=".5" fill="#b6c2dc"/>
<rect x="178.8" y="13.4" width=".8" height=".8" fill="#9aaede"/><rect x="178.8" y="14.9" width=".8" height=".8" fill="#9aaede"/><rect x="178.8" y="16.4" width=".8" height=".8" fill="#9aaede"/>
<path d="M175 15 l.8 .8 l.8 -.8 M185 15 l.8 .8 l.8 -.8" stroke="#aaa" stroke-width=".35" fill="none"/>
<rect x="189.4" y="12.5" width=".35" height="6" fill="#dcdcdc"/>
<rect x="193.4" y="13.6" width="4" height=".5" fill="#c4c4cc"/><rect x="193.4" y="15.1" width="4" height=".5" fill="#c4c4cc"/><rect x="193.4" y="16.6" width="4" height=".5" fill="#c4c4cc"/>
<rect x="200.6" y="13.6" width="4" height=".5" fill="#c4c4cc"/><rect x="200.6" y="15.1" width="4" height=".5" fill="#c4c4cc"/><rect x="200.6" y="16.6" width="4" height=".5" fill="#c4c4cc"/>
<rect x="207.4" y="12.5" width=".35" height="6" fill="#dcdcdc"/>
<rect x="212" y="13.4" width="3.4" height=".5" fill="#bcc3d8"/><rect x="212" y="14.9" width="3.4" height=".5" fill="#bcc3d8"/><rect x="212" y="16.4" width="3.4" height=".5" fill="#bcc3d8"/><rect x="212" y="17.9" width="3.4" height=".5" fill="#bcc3d8"/>
<path d="M210.6 13.2 v4.8" stroke="#9db0dc" stroke-width=".5"/>
<path d="M217.4 15 l.8 .8 l.8 -.8" stroke="#aaa" stroke-width=".35" fill="none"/>
<rect x="222.3" y="12.5" width=".35" height="6" fill="#dcdcdc"/>
<rect x="225.8" y="14" width="3.6" height=".5" fill="#bccbe8"/><rect x="225.8" y="15.5" width="3.6" height=".5" fill="#bccbe8"/>
<path d="M231.6 15 l.8 .8 l.8 -.8" stroke="#aaa" stroke-width=".35" fill="none"/>
<rect x="169.4" y="23" width="4" height=".5" fill="#c6c6c6"/><rect x="169.4" y="24.5" width="4" height=".5" fill="#c6c6c6"/><rect x="169.4" y="26" width="4" height=".5" fill="#c6c6c6"/><rect x="169.4" y="27.5" width="4" height=".5" fill="#c6c6c6"/>
<rect x="176.6" y="23" width="4" height=".5" fill="#c6c6c6"/><rect x="176.6" y="24.5" width="4" height=".5" fill="#c6c6c6"/><rect x="176.6" y="26" width="4" height=".5" fill="#c6c6c6"/><rect x="176.6" y="27.5" width="4" height=".5" fill="#c6c6c6"/>
<rect x="183.8" y="23" width="4" height=".5" fill="#c6c6c6"/><rect x="183.8" y="24.5" width="4" height=".5" fill="#c6c6c6"/><rect x="183.8" y="26" width="4" height=".5" fill="#c6c6c6"/><rect x="183.8" y="27.5" width="4" height=".5" fill="#c6c6c6"/>
<rect x="191" y="23" width="4" height=".5" fill="#c6c6c6"/><rect x="191" y="24.5" width="4" height=".5" fill="#c6c6c6"/><rect x="191" y="26" width="4" height=".5" fill="#c6c6c6"/><rect x="191" y="27.5" width="4" height=".5" fill="#c6c6c6"/>
<rect x="197.2" y="22" width=".35" height="6" fill="#dcdcdc"/>
<path d="M202.4 22.6 v5 M201 24 l1.4 -1.4 l1.4 1.4" stroke="#b3c4e6" stroke-width=".5" fill="none"/><path d="M206.6 25 l.8 .8 l.8 -.8" stroke="#aaa" stroke-width=".35" fill="none"/>
<rect x="210.8" y="23" width="4.8" height="3.6" fill="none" stroke="#b9c6e2" stroke-width=".5"/><path d="M210 24.8 h6.4" stroke="#b9c6e2" stroke-width=".4"/><path d="M217.4 25 l.8 .8 l.8 -.8" stroke="#aaa" stroke-width=".35" fill="none"/>
</g>
<path d="M237 13 h5 l3 3 v4 h-5 z" fill="#cfe3cf" stroke="#9cc59e" stroke-width=".5"/><rect x="240" y="16.5" width="5" height="3.5" fill="#e3efe3" stroke="#a9cdaa" stroke-width=".4"/>
<path d="M246.8 16 l.8 .8 l.8 -.8" stroke="#bbb" stroke-width=".35" fill="none"/>
<text x="242.2" y="24" font-size="3.2" fill="#b3b3b3" textLength="13.6" lengthAdjust="spacingAndGlyphs" text-anchor="middle" >Convert to</text>
<text x="242.2" y="27.6" font-size="3.2" fill="#b3b3b3" textLength="11.6" lengthAdjust="spacingAndGlyphs" text-anchor="middle" >SmartArt</text>
<rect x="253" y="11.5" width=".4" height="16" fill="#dcdcdc"/>
<rect x="256.2" y="12.6" width="8" height="6.4" rx=".6" fill="#dcebfb" stroke="#3d5a80" stroke-width=".55"/><path d="M256.6 18.2 l2.6 -2.6 l1.8 1.6 l1.4 -1 l1.6 1.6 v.8 h-7.4z" fill="#3b8ee0"/><circle cx="262.2" cy="14.4" r=".7" fill="#3b8ee0"/>
<path d="M266 16 l.8 .8 l.8 -.8" stroke="#666" stroke-width=".35" fill="none"/>
<text x="257.2" y="24.2" font-size="3.5" fill="#2b2b2b" font-weight="bold" textLength="9.4" lengthAdjust="spacingAndGlyphs" >Picture</text>
<circle cx="271.5" cy="14.8" r="1.8" fill="#c7dbf5" stroke="#3a6fc2" stroke-width=".55"/><rect x="269" y="13" width="2.8" height="2.6" fill="#e8f0fb" stroke="#3a6fc2" stroke-width=".5"/>
<path d="M275.4 15 l.8 .8 l.8 -.8" stroke="#666" stroke-width=".35" fill="none"/>
<rect x="269.2" y="22.4" width="3.6" height="3.4" fill="#dfe9f8" stroke="#3a6fc2" stroke-width=".5"/><path d="M269.2 24.1 h3.6" stroke="#3a6fc2" stroke-width=".4"/>
<rect x="281.8" y="11.5" width=".4" height="16" fill="#dcdcdc"/>
<rect x="285.4" y="12.2" width="3.8" height="3.8" fill="#fde8b4" stroke="#e0a030" stroke-width=".55"/><rect x="287.6" y="14.6" width="4.2" height="4.2" fill="#fbd27a" stroke="#d8922a" stroke-width=".55"/><rect x="290.4" y="17" width="2.8" height="2.8" fill="#fafafa" stroke="#555" stroke-width=".5"/>
<path d="M294.6 16 l.8 .8 l.8 -.8" stroke="#666" stroke-width=".35" fill="none"/>
<text x="284.8" y="24.2" font-size="3.5" fill="#2b2b2b" font-weight="bold" textLength="10.9" lengthAdjust="spacingAndGlyphs" >Arrange</text>
<rect x="299.6" y="12.4" width="6.8" height="6.6" rx=".8" fill="#f8f8fb" stroke="#d3d3dc" stroke-width=".5"/><path d="M303 18.6 l3.4 -3.6" stroke="#b5bde0" stroke-width=".7"/>
<path d="M308.4 16 l.8 .8 l.8 -.8" stroke="#bbb" stroke-width=".35" fill="none"/>
<text x="303.6" y="24" font-size="3.2" fill="#b3b3b3" textLength="7.4" lengthAdjust="spacingAndGlyphs" text-anchor="middle" >Quick</text>
<text x="303.6" y="27.6" font-size="3.2" fill="#b3b3b3" textLength="7.6" lengthAdjust="spacingAndGlyphs" text-anchor="middle" >Styles</text>
<path d="M312.4 16 l1.8 -3 l1.8 3z" fill="#f6d0c8" stroke="#eba898" stroke-width=".35"/><rect x="312.2" y="16.8" width="4" height=".8" fill="#e98d7a"/>
<path d="M318.2 15 l.8 .8 l.8 -.8 M318.2 25 l.8 .8 l.8 -.8" stroke="#bbb" stroke-width=".35" fill="none"/>
<rect x="312.4" y="22.4" width="3.8" height="2.8" fill="none" stroke="#b5c6e8" stroke-width=".5"/><rect x="312.2" y="26" width="4" height=".7" fill="#a9bfe8"/>
<rect x="323.3" y="11.5" width=".4" height="16" fill="#dcdcdc"/>
<path d="M330.4 12.4 h4 l2.2 2.2 v4.6 h-6.2z" fill="#e4effb" stroke="#bcd3ee" stroke-width=".5"/><path d="M332 16.8 l3 -3.4" stroke="#a9c6ea" stroke-width=".7"/>
<path d="M338.6 16 l.8 .8 l.8 -.8" stroke="#ccc" stroke-width=".35" fill="none"/>
<text x="326.6" y="24.2" font-size="3.2" fill="#b9b9b9" textLength="13.9" lengthAdjust="spacingAndGlyphs" >Sensitivity</text>
<rect x="344.2" y="11.5" width=".4" height="16" fill="#dcdcdc"/>
<g fill="#fbe3de" stroke="#e4614c" stroke-width=".6"><rect x="348.6" y="12.2" width="3.5" height="3.5"/><rect x="352.9" y="12.2" width="3.5" height="3.5"/><rect x="348.6" y="16.5" width="3.5" height="3.5"/><rect x="352.9" y="16.5" width="3.5" height="3.5"/></g>
<text x="347.6" y="24.2" font-size="3.5" fill="#2b2b2b" font-weight="bold" textLength="10.2" lengthAdjust="spacingAndGlyphs" >Add-ins</text>
<rect x="361.9" y="11.5" width=".4" height="16" fill="#dcdcdc"/>
<rect x="369" y="13.6" width="7.2" height="5.8" rx=".6" fill="#fafafa" stroke="#555" stroke-width=".55"/><path d="M372.6 13.6 v5.8" stroke="#777" stroke-width=".4"/><circle cx="375.8" cy="13" r="1.1" fill="#e0452e"/>
<text x="373" y="24" font-size="3.3" fill="#2b2b2b" font-weight="bold" textLength="9" lengthAdjust="spacingAndGlyphs" text-anchor="middle" >Design</text>
<text x="373" y="27.5" font-size="3.3" fill="#2b2b2b" font-weight="bold" textLength="16.4" lengthAdjust="spacingAndGlyphs" text-anchor="middle" >Suggestions</text>
<g><circle cx="386.2" cy="14.4" r="2.4" fill="#2f80ed"/><circle cx="389.6" cy="14.4" r="2.4" fill="#a259e6"/><circle cx="386.2" cy="17.6" r="2.4" fill="#2fc26e"/><circle cx="389.6" cy="17.6" r="2.4" fill="#f0792e"/><circle cx="387.9" cy="16" r="1.3" fill="#f7f2ff"/></g>
<text x="388" y="24.2" font-size="3.4" fill="#2b2b2b" font-weight="bold" textLength="9.6" lengthAdjust="spacingAndGlyphs" text-anchor="middle" >Copilot</text>
</g>
</svg></div>
<div class="mode on" style="left:475px;width:97px"></div>
<div class="mode" style="left:577.4px;width:97.2px"></div>
<div class="mode" style="left:680.6px;width:96px"></div>
<div class="mode" style="left:783px;width:96.8px"></div>
<div class="t" style="left:494.8px;top:358px;font-size:10.87px;line-height:10.87px;color:#4f52b2;transform:scaleX(0.97);">Content only</div>
<div class="t" style="left:606px;top:358px;font-size:10.87px;line-height:10.87px;color:#242424;transform:scaleX(0.9536);">Standout</div>
<div class="t" style="left:709.7px;top:358px;font-size:10.87px;line-height:10.87px;color:#242424;transform:scaleX(0.9245);">Reporter</div>
<div class="t" style="left:803.2px;top:358px;font-size:10.87px;line-height:10.87px;color:#242424;transform:scaleX(0.9401);">Side-by-side</div>
<svg class="abs" style="left:516.7px;top:337.6px" width="14.2" height="9.8" viewBox="0 0 14.2 9.8"><rect width="14.2" height="9.8" rx="2.2" fill="#5b5fc7"/></svg>
<svg class="abs" style="left:618px;top:336px" width="18" height="15" viewBox="0 0 18 15"><path d="M9.5 11.2 H3.6 C2.4 11.2 1.7 10.5 1.7 9.4 V3.5 C1.7 2.4 2.4 1.7 3.6 1.7 H12.4 C13.6 1.7 14.3 2.4 14.3 3.5 V5.6" fill="none" stroke="#333" stroke-width="1.15" stroke-linecap="round"/><circle cx="12.7" cy="8.2" r="1.9" fill="#242424"/><path d="M9.5 12 C9.5 10.6 15.9 10.6 15.9 12 C15.9 14.2 9.5 14.2 9.5 12Z" fill="#242424"/></svg>
<svg class="abs" style="left:720px;top:336px" width="18" height="15" viewBox="0 0 18 15"><path d="M9.5 11.2 H3.4 C2.2 11.2 1.5 10.5 1.5 9.4 V3.5 C1.5 2.4 2.2 1.7 3.4 1.7 H12.8 C14 1.7 14.7 2.4 14.7 3.5 V5.6" fill="none" stroke="#333" stroke-width="1.15" stroke-linecap="round"/><rect x="3.4" y="3.5" width="5.6" height="4" rx=".7" fill="#242424"/><circle cx="13" cy="8.3" r="1.9" fill="#242424"/><path d="M9.8 12.1 C9.8 10.7 16.2 10.7 16.2 12.1 C16.2 14.3 9.8 14.3 9.8 12.1Z" fill="#242424"/></svg>
<svg class="abs" style="left:823px;top:336px" width="17" height="13" viewBox="0 0 17 13"><rect x="1.4" y="2.2" width="13.4" height="8.8" rx="1.8" fill="none" stroke="#333" stroke-width="1.15"/><rect x="3.3" y="4" width="5.4" height="4.2" rx=".7" fill="#242424"/><circle cx="11.8" cy="4.7" r="1.25" fill="#242424"/><path d="M10 7 C10 6.3 13.6 6.3 13.6 7 V8 C13.6 9.4 10 9.4 10 8Z" fill="#242424"/></svg>
<div class="t" style="left:475.1px;top:402px;font-size:11.88px;line-height:11.88px;color:#242424;transform:scaleX(1.0562);-webkit-text-stroke:.45px #242424;">Sharing options</div>
<div class="t" style="left:475.1px;top:433px;font-size:12.03px;line-height:12.03px;color:#242424;transform:scaleX(1.0212);">Include content audio</div>
<div class="t" style="left:475.1px;top:464px;font-size:12.03px;line-height:12.03px;color:#242424;transform:scaleX(1.0259);">Optimize for playing video</div>
<div class="tog" style="top:428.3px"><i></i></div>
<div class="tog" style="top:459.9px"><i></i></div>
<div class="abs" style="left:684.7px;top:569.7px;width:195.2px;height:28px;border-radius:4px;background:#4f52b2"></div>
<div class="t" style="left:766.6px;top:578px;font-size:12.46px;line-height:12.46px;color:#fff;transform:scaleX(0.9083);-webkit-text-stroke:.45px #fff;">Share</div>
</body>
</html>
